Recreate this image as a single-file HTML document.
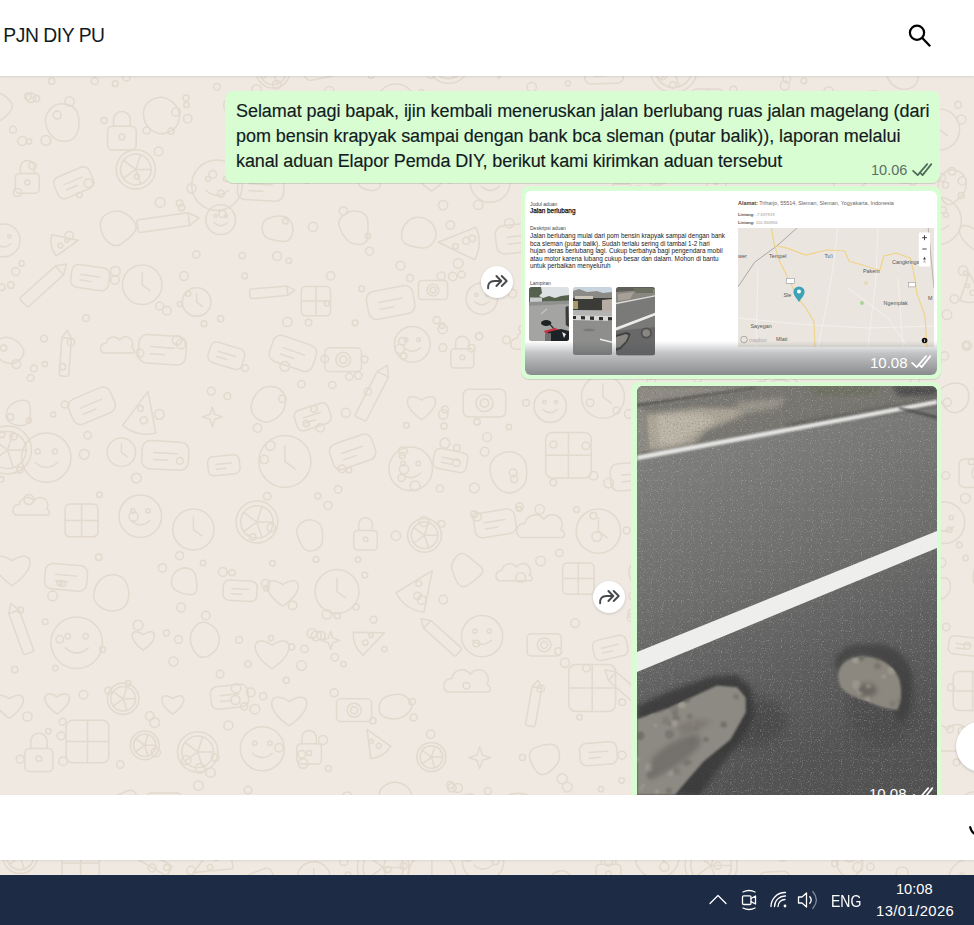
<!DOCTYPE html>
<html><head><meta charset="utf-8">
<style>
*{margin:0;padding:0;box-sizing:border-box}
html,body{width:974px;height:925px;overflow:hidden}
body{position:relative;background:#efe9e2;font-family:"Liberation Sans",sans-serif;color:#111b21}
.abs{position:absolute}
#chat{left:0;top:0;width:974px;height:795px;overflow:hidden}
#hdr{left:0;top:0;width:974px;height:76px;background:#fff;box-shadow:0 1px 2px rgba(11,20,26,.10);z-index:5}
#title{left:3.3px;top:24.5px;font-size:19.3px;line-height:22px;letter-spacing:-0.45px;white-space:nowrap}
.bub{background:#d9fdd3;border-radius:8px;box-shadow:0 1px 0.5px rgba(11,20,26,.13)}
.ln{position:absolute;left:236px;font-size:18px;line-height:22px;white-space:nowrap;color:#111b21;-webkit-text-stroke:0.15px #111b21}
.fwd{width:32px;height:32px;border-radius:50%;background:#fff;box-shadow:0 1px 3px rgba(11,20,26,.16)}
#input{left:0;top:795px;width:974px;height:65px;background:#fff;z-index:5;box-shadow:0 1px 2px rgba(11,20,26,.08)}
#tb{left:0;top:875px;width:974px;height:50px;background:#1d2b44;z-index:6}
.tbt{position:absolute;color:#fff;white-space:nowrap}
.tm{position:absolute;font-size:14.5px;line-height:16px;white-space:nowrap}
.s{position:absolute;white-space:nowrap;line-height:1}
</style></head><body>
<svg class="abs" style="left:0;top:0" width="974" height="875" viewBox="0 0 974 875"><g fill="none" stroke="#e3d9cd" stroke-width="1.5" stroke-linecap="round" stroke-linejoin="round"><circle cx="-1.3" cy="1.7" r="19.4"/><path d="M-10.1 5.6 Q-1.3 13.3 7.4 5.6"/><circle cx="-8.1" cy="-3.2" r="1.9"/><circle cx="5.5" cy="-3.2" r="1.9"/><g transform="rotate(25 67.9 -8.7)"><rect x="46.4" y="-21.6" width="43.1" height="25.9" rx="7.5"/><path d="M57.2 -10.8 h21.6 M57.2 -4.4 h12.9"/></g><circle cx="107.2" cy="-1.5" r="15.1"/><circle cx="107.2" cy="-1.5" r="11.8"/><path d="M107.2 -1.5 L119.0 -1.5"/><path d="M107.2 -1.5 L110.8 9.7"/><path d="M107.2 -1.5 L97.7 5.4"/><path d="M107.2 -1.5 L97.7 -8.4"/><path d="M107.2 -1.5 L110.8 -12.7"/><path d="M182.7 22.3 C157.3 5.4 163.6 -13.6 182.7 -0.9 C201.7 -13.6 208.0 5.4 182.7 22.3Z"/><g transform="rotate(135 229.1 -1.3)"><rect x="207.6" y="-6.7" width="43.0" height="10.7" rx="2"/><path d="M207.6 -6.7 L199.0 -1.3 L207.6 4.1"/></g><rect x="256.6" y="-25.7" width="42.4" height="27.6" rx="5.3"/><circle cx="277.8" cy="-11.9" r="8.5"/><circle cx="277.8" cy="-11.9" r="4.2"/><path d="M370.7 -12.8 Q373.1 -4.9 369.5 1.5 Q365.9 7.8 358.9 10.0 Q351.9 12.2 346.7 7.1 Q341.5 2.0 342.2 -4.5 Q342.8 -11.1 347.1 -17.8 Q351.3 -24.6 359.8 -22.6 Q368.4 -20.7 370.7 -12.8 Z"/><path d="M392.4 15.1 a8.1 8.1 0 0 1 4.6 -15.0 a11.5 11.5 0 0 1 20.8 -4.6 a9.2 9.2 0 0 1 18.5 11.5 a4.6 4.6 0 0 1 2.3 8.1 Z"/><circle cx="464.4" cy="-13.2" r="18.8"/><path d="M455.9 -9.4 Q464.4 -1.9 472.8 -9.4"/><circle cx="457.8" cy="-17.9" r="1.9"/><circle cx="470.9" cy="-17.9" r="1.9"/><polygon points="531.7,-10.2 533.4,-4.9 538.7,-3.2 533.4,-1.4 531.7,3.8 530.0,-1.4 524.7,-3.2 530.0,-4.9"/><g transform="rotate(20 571.9 11.5)"><rect x="553.4" y="0.4" width="37.0" height="22.2" rx="6.5"/><path d="M562.6 9.6 h18.5 M562.6 15.2 h11.1"/></g><path d="M648.5 -18.3 Q651.7 -12.0 648.0 -6.2 Q644.4 -0.4 637.8 2.2 Q631.3 4.7 622.9 1.4 Q614.4 -2.0 615.3 -11.5 Q616.1 -21.1 623.9 -23.9 Q631.8 -26.7 638.5 -25.7 Q645.3 -24.7 648.5 -18.3 Z"/><g transform="rotate(10 684.8 -12.3)"><rect x="668.7" y="-22.0" width="32.3" height="19.4" rx="5.6"/><path d="M676.8 -13.9 h16.1 M676.8 -9.1 h9.7"/></g><circle cx="745.3" cy="0.2" r="19.0"/><circle cx="745.3" cy="0.2" r="14.8"/><path d="M745.3 0.2 L760.1 0.2"/><path d="M745.3 0.2 L749.9 14.4"/><path d="M745.3 0.2 L733.3 9.0"/><path d="M745.3 0.2 L733.3 -8.5"/><path d="M745.3 0.2 L749.9 -13.9"/><path d="M819.7 -8.4 Q822.0 -2.9 819.7 2.5 Q817.4 7.9 811.8 8.2 Q806.1 8.5 801.1 5.8 Q796.1 3.1 798.6 -1.8 Q801.1 -6.6 803.9 -9.4 Q806.6 -12.2 812.1 -13.0 Q817.5 -13.9 819.7 -8.4 Z"/><path d="M872.9 22.9 C841.8 2.2 849.6 -21.1 872.9 -5.6 C896.1 -21.1 903.9 2.2 872.9 22.9Z"/><path d="M896.0 2.8 a8.4 8.4 0 0 1 4.8 -15.6 a12.0 12.0 0 0 1 21.6 -4.8 a9.6 9.6 0 0 1 19.2 12.0 a4.8 4.8 0 0 1 2.4 8.4 Z"/><path d="M995.6 -18.7 Q997.4 -11.9 995.6 -5.0 Q993.8 1.9 986.6 2.6 Q979.3 3.4 973.7 -0.7 Q968.0 -4.8 966.1 -12.8 Q964.2 -20.9 971.7 -24.5 Q979.1 -28.2 986.4 -26.9 Q993.7 -25.5 995.6 -18.7 Z"/><circle cx="39.3" cy="49.1" r="17.7"/><circle cx="39.3" cy="49.1" r="13.8"/><path d="M39.3 49.1 L53.1 49.1"/><path d="M39.3 49.1 L43.5 62.3"/><path d="M39.3 49.1 L28.1 57.2"/><path d="M39.3 49.1 L28.1 41.0"/><path d="M39.3 49.1 L43.5 36.0"/><path d="M89.2 57.2 Q92.9 61.1 90.2 66.2 Q87.5 71.3 81.9 73.0 Q76.3 74.7 72.4 70.5 Q68.6 66.3 68.3 61.0 Q68.0 55.6 72.6 53.5 Q77.2 51.3 81.3 52.4 Q85.5 53.4 89.2 57.2 Z"/><rect x="123.9" y="56.7" width="20.2" height="16.9" rx="3.4"/><path d="M128.2 56.7 v-5.1 a5.9 5.9 0 0 1 11.8 0 v5.1"/><circle cx="134.1" cy="64.2" r="2.0"/><g transform="rotate(-14 208.7 51.2)"><rect x="191.2" y="40.7" width="35.0" height="21.0" rx="6.1"/><path d="M200.0 49.4 h17.5 M200.0 54.7 h10.5"/></g><circle cx="273.0" cy="71.4" r="16.7"/><circle cx="273.0" cy="71.4" r="13.1"/><path d="M273.0 71.4 L286.1 71.4"/><path d="M273.0 71.4 L277.1 83.8"/><path d="M273.0 71.4 L262.5 79.0"/><path d="M273.0 71.4 L262.5 63.7"/><path d="M273.0 71.4 L277.1 58.9"/><g transform="rotate(-12 320.7 67.9)"><rect x="303.3" y="57.4" width="34.7" height="20.8" rx="6.1"/><path d="M312.0 66.1 h17.4 M312.0 71.3 h10.4"/></g><path d="M395.8 38.7 Q396.0 45.9 394.1 51.0 Q392.1 56.1 386.4 58.1 Q380.8 60.0 375.1 56.5 Q369.5 52.9 371.1 46.7 Q372.6 40.5 376.7 36.2 Q380.8 31.9 388.1 31.7 Q395.5 31.5 395.8 38.7 Z"/><circle cx="448.5" cy="62.4" r="21.1"/><circle cx="448.5" cy="62.4" r="16.4"/><path d="M448.5 62.4 L464.9 62.4"/><path d="M448.5 62.4 L453.5 78.0"/><path d="M448.5 62.4 L435.2 72.1"/><path d="M448.5 62.4 L435.2 52.7"/><path d="M448.5 62.4 L453.5 46.8"/><g transform="rotate(17 504.9 57.3)"><path d="M504.9 79.7 L489.2 43.8 Q504.9 36.0 520.5 43.8 Z"/><circle cx="502.6" cy="52.8" r="3.4"/><circle cx="508.2" cy="62.9" r="2.7"/></g><g transform="rotate(-6 537.6 61.8)"><rect x="522.8" y="52.9" width="29.6" height="17.8" rx="5.2"/><path d="M530.2 60.3 h14.8 M530.2 64.8 h8.9"/></g><g transform="rotate(-2 603.9 72.0)"><rect x="584.5" y="60.3" width="38.9" height="23.3" rx="6.8"/><path d="M594.2 70.0 h19.4 M594.2 75.9 h11.7"/></g><circle cx="673.6" cy="69.2" r="23.5"/><circle cx="673.6" cy="69.2" r="18.3"/><path d="M673.6 69.2 L692.0 69.2"/><path d="M673.6 69.2 L679.3 86.7"/><path d="M673.6 69.2 L658.8 80.0"/><path d="M673.6 69.2 L658.8 58.4"/><path d="M673.6 69.2 L679.3 51.8"/><g transform="rotate(1 736.6 53.9)"><rect x="711.8" y="39.0" width="49.6" height="29.8" rx="8.7"/><path d="M724.2 51.4 h24.8 M724.2 58.8 h14.9"/></g><g transform="rotate(14 795.4 44.8)"><rect x="774.6" y="32.3" width="41.7" height="25.0" rx="7.3"/><path d="M785.0 42.8 h20.9 M785.0 49.0 h12.5"/></g><polygon points="845.5,47.3 847.4,52.8 852.9,54.6 847.4,56.4 845.5,61.9 843.7,56.4 838.2,54.6 843.7,52.8"/><path d="M917.9 63.8 Q920.1 71.8 917.8 79.8 Q915.6 87.7 907.1 89.0 Q898.7 90.3 892.8 84.9 Q887.0 79.5 885.4 71.0 Q883.7 62.6 891.7 60.2 Q899.7 57.8 907.7 56.8 Q915.7 55.8 917.9 63.8 Z"/><g transform="rotate(19 943.8 60.8)"><rect x="929.6" y="52.3" width="28.5" height="17.1" rx="5.0"/><path d="M936.7 59.4 h14.3 M936.7 63.7 h8.6"/></g><g transform="rotate(-25 1004.2 65.8)"><rect x="987.1" y="55.6" width="34.1" height="20.5" rx="6.0"/><path d="M995.6 64.1 h17.1 M995.6 69.3 h10.2"/></g><path d="M9.8 100.5 Q14.5 106.0 10.1 111.8 Q5.6 117.7 -1.2 121.4 Q-8.1 125.2 -13.2 119.1 Q-18.3 113.0 -17.3 106.5 Q-16.4 99.9 -11.8 95.4 Q-7.1 91.0 -1.0 93.0 Q5.1 94.9 9.8 100.5 Z"/><path d="M78.2 115.5 Q80.3 124.5 77.4 132.5 Q74.5 140.5 66.2 141.2 Q57.8 141.9 52.5 136.7 Q47.3 131.5 45.7 123.7 Q44.1 116.0 50.4 109.1 Q56.6 102.1 66.4 104.3 Q76.1 106.5 78.2 115.5 Z"/><rect x="107.6" y="126.2" width="28.6" height="23.9" rx="4.8"/><path d="M113.6 126.2 v-7.2 a8.4 8.4 0 0 1 16.7 0 v7.2"/><circle cx="121.9" cy="137.0" r="2.9"/><path d="M177.6 108.4 Q181.2 115.2 178.2 122.8 Q175.2 130.3 166.9 132.9 Q158.5 135.5 151.3 130.0 Q144.0 124.4 143.5 114.9 Q142.9 105.5 150.8 100.4 Q158.6 95.3 166.3 98.4 Q174.0 101.6 177.6 108.4 Z"/><path d="M241.2 127.5 C214.6 109.8 221.3 89.9 241.2 103.1 C261.1 89.9 267.8 109.8 241.2 127.5Z"/><polygon points="283.9,103.3 286.0,109.8 292.5,111.9 286.0,114.1 283.9,120.5 281.7,114.1 275.2,111.9 281.7,109.8"/><rect x="329.2" y="121.9" width="20.2" height="16.8" rx="3.4"/><path d="M333.4 121.9 v-5.1 a5.9 5.9 0 0 1 11.8 0 v5.1"/><circle cx="339.3" cy="129.4" r="2.0"/><circle cx="395.9" cy="103.3" r="19.4"/><path d="M387.2 107.2 Q395.9 114.9 404.7 107.2"/><circle cx="389.2" cy="98.5" r="1.9"/><circle cx="402.7" cy="98.5" r="1.9"/><g transform="rotate(350 467.6 120.3)"><path d="M467.6 145.8 L449.8 105.0 Q467.6 96.1 485.5 105.0 Z"/><circle cx="465.1" cy="115.2" r="3.8"/><circle cx="471.5" cy="126.7" r="3.1"/></g><rect x="503.9" y="123.5" width="19.4" height="16.1" rx="3.2"/><path d="M507.9 123.5 v-4.8 a5.7 5.7 0 0 1 11.3 0 v4.8"/><circle cx="513.5" cy="130.7" r="1.9"/><path d="M566.3 128.1 C546.9 115.2 551.8 100.7 566.3 110.4 C580.8 100.7 585.7 115.2 566.3 128.1Z"/><g transform="rotate(179 631.6 111.7)"><rect x="612.9" y="107.0" width="37.4" height="9.4" rx="2"/><path d="M612.9 107.0 L605.4 111.7 L612.9 116.4"/></g><rect x="691.8" y="88.9" width="31.1" height="31.1" rx="4.7"/><path d="M707.4 88.9 V120.0 M691.8 104.4 H722.9"/><polygon points="752.7,110.2 755.0,117.2 762.0,119.5 755.0,121.8 752.7,128.8 750.4,121.8 743.4,119.5 750.4,117.2"/><path d="M803.1 132.1 a6.8 6.8 0 0 1 3.9 -12.7 a9.8 9.8 0 0 1 17.6 -3.9 a7.8 7.8 0 0 1 15.7 9.8 a3.9 3.9 0 0 1 2.0 6.8 Z"/><circle cx="874.2" cy="107.7" r="16.6"/><path d="M866.8 111.0 Q874.2 117.7 881.7 111.0"/><circle cx="868.4" cy="103.6" r="1.7"/><circle cx="880.0" cy="103.6" r="1.7"/><circle cx="939.2" cy="129.5" r="20.4"/><path d="M939.2 117.2 V129.5 L947.4 135.6"/><polygon points="994.1,103.6 996.0,109.2 1001.5,111.0 996.0,112.8 994.1,118.3 992.3,112.8 986.8,111.0 992.3,109.2"/><rect x="15.4" y="173.4" width="23.8" height="19.8" rx="4.0"/><path d="M20.4 173.4 v-6.0 a6.9 6.9 0 0 1 13.9 0 v6.0"/><circle cx="27.3" cy="182.4" r="2.4"/><g transform="rotate(-23 73.8 182.7)"><rect x="54.6" y="171.2" width="38.3" height="23.0" rx="6.7"/><path d="M64.2 180.7 h19.1 M64.2 186.5 h11.5"/></g><circle cx="135.8" cy="169.4" r="19.6"/><circle cx="135.8" cy="169.4" r="15.3"/><path d="M135.8 169.4 L151.2 169.4"/><path d="M135.8 169.4 L140.6 184.0"/><path d="M135.8 169.4 L123.4 178.4"/><path d="M135.8 169.4 L123.4 160.4"/><path d="M135.8 169.4 L140.6 154.8"/><circle cx="217.0" cy="185.2" r="25.3"/><path d="M205.6 190.3 Q217.0 200.4 228.4 190.3"/><circle cx="208.1" cy="178.9" r="2.5"/><circle cx="225.9" cy="178.9" r="2.5"/><g transform="rotate(3 260.8 186.6)"><rect x="237.7" y="172.7" width="46.2" height="27.7" rx="8.1"/><path d="M249.2 184.3 h23.1 M249.2 191.2 h13.9"/></g><g transform="rotate(143 319.7 168.1)"><rect x="299.5" y="163.1" width="40.5" height="10.1" rx="2"/><path d="M299.5 163.1 L291.4 168.1 L299.5 173.2"/></g><path d="M379.3 174.6 Q381.8 178.8 380.5 184.4 Q379.2 190.1 373.3 190.5 Q367.4 191.0 362.4 188.0 Q357.5 184.9 357.7 178.9 Q358.0 172.9 362.8 170.3 Q367.6 167.7 372.2 169.1 Q376.8 170.5 379.3 174.6 Z"/><path d="M431.6 191.2 C407.3 175.1 413.4 156.9 431.6 169.0 C449.7 156.9 455.8 175.1 431.6 191.2Z"/><circle cx="490.2" cy="182.4" r="19.9"/><path d="M481.3 186.4 Q490.2 194.4 499.2 186.4"/><circle cx="483.3" cy="177.5" r="2.0"/><circle cx="497.2" cy="177.5" r="2.0"/><circle cx="556.3" cy="161.8" r="19.0"/><path d="M547.8 165.6 Q556.3 173.2 564.9 165.6"/><circle cx="549.7" cy="157.1" r="1.9"/><circle cx="563.0" cy="157.1" r="1.9"/><rect x="611.6" y="184.2" width="20.3" height="17.0" rx="3.4"/><path d="M615.9 184.2 v-5.1 a5.9 5.9 0 0 1 11.9 0 v5.1"/><circle cx="621.8" cy="191.8" r="2.0"/><g transform="rotate(-19 666.8 169.5)"><rect x="646.5" y="157.3" width="40.6" height="24.4" rx="7.1"/><path d="M656.7 167.5 h20.3 M656.7 173.6 h12.2"/></g><rect x="707.0" y="175.7" width="18.7" height="15.6" rx="3.1"/><path d="M710.9 175.7 v-4.7 a5.4 5.4 0 0 1 10.9 0 v4.7"/><circle cx="716.4" cy="182.7" r="1.9"/><path d="M799.7 155.5 Q800.4 160.6 799.1 165.1 Q797.9 169.5 792.8 171.9 Q787.7 174.4 784.3 169.9 Q780.8 165.4 780.1 160.3 Q779.4 155.1 783.7 151.7 Q788.0 148.3 793.5 149.3 Q799.1 150.3 799.7 155.5 Z"/><path d="M868.1 169.2 Q872.2 177.5 865.8 182.8 Q859.4 188.1 853.0 192.1 Q846.6 196.1 839.3 191.3 Q832.1 186.5 832.9 177.9 Q833.8 169.2 840.3 164.4 Q846.8 159.6 855.4 160.3 Q864.1 160.9 868.1 169.2 Z"/><path d="M915.7 159.2 Q920.4 166.1 917.3 175.0 Q914.2 184.0 905.2 183.2 Q896.2 182.5 888.3 179.0 Q880.4 175.5 880.1 166.0 Q879.8 156.4 887.3 149.9 Q894.8 143.4 902.8 147.9 Q910.9 152.4 915.7 159.2 Z"/><path d="M965.4 178.8 Q967.6 185.8 964.4 191.7 Q961.1 197.5 954.0 202.5 Q946.9 207.6 942.5 200.0 Q938.1 192.5 938.3 185.9 Q938.5 179.4 943.2 174.0 Q947.9 168.7 955.5 170.2 Q963.1 171.7 965.4 178.8 Z"/><circle cx="1027.4" cy="175.2" r="16.4"/><circle cx="1027.4" cy="175.2" r="12.8"/><path d="M1027.4 175.2 L1040.2 175.2"/><path d="M1027.4 175.2 L1031.3 187.4"/><path d="M1027.4 175.2 L1017.0 182.7"/><path d="M1027.4 175.2 L1017.0 167.7"/><path d="M1027.4 175.2 L1031.3 163.0"/><circle cx="3.6" cy="240.4" r="16.4"/><path d="M-3.8 243.7 Q3.6 250.2 11.0 243.7"/><circle cx="-2.2" cy="236.3" r="1.6"/><circle cx="9.3" cy="236.3" r="1.6"/><g transform="rotate(258 63.1 243.5)"><path d="M63.1 258.9 L52.3 234.3 Q63.1 228.9 73.9 234.3 Z"/><circle cx="61.6" cy="240.4" r="2.3"/><circle cx="65.4" cy="247.4" r="1.8"/></g><path d="M134.1 221.4 Q138.5 227.6 133.6 233.3 Q128.8 238.9 121.9 243.7 Q115.0 248.5 108.4 242.4 Q101.8 236.3 100.5 227.0 Q99.3 217.8 107.4 213.6 Q115.6 209.4 122.7 212.2 Q129.7 215.1 134.1 221.4 Z"/><g transform="rotate(172 163.2 222.8)"><rect x="137.3" y="216.4" width="51.8" height="12.9" rx="2"/><path d="M137.3 216.4 L127.0 222.8 L137.3 229.3"/></g><circle cx="220.7" cy="219.7" r="14.9"/><path d="M213.9 222.7 Q220.7 228.7 227.4 222.7"/><circle cx="215.4" cy="216.0" r="1.5"/><circle cx="225.9" cy="216.0" r="1.5"/><path d="M291.4 222.8 Q294.3 228.9 291.8 235.6 Q289.3 242.2 282.6 241.5 Q276.0 240.9 269.3 238.8 Q262.7 236.7 262.2 228.7 Q261.7 220.7 268.7 218.2 Q275.7 215.7 282.1 216.2 Q288.5 216.6 291.4 222.8 Z"/><path d="M367.9 221.3 Q368.3 229.3 367.6 237.0 Q366.9 244.6 359.1 244.5 Q351.3 244.5 346.9 239.8 Q342.6 235.2 339.7 228.0 Q336.8 220.7 343.5 215.2 Q350.2 209.7 358.8 211.5 Q367.5 213.3 367.9 221.3 Z"/><path d="M434.1 226.7 Q438.2 234.0 434.0 241.2 Q429.8 248.4 422.5 248.1 Q415.2 247.7 408.0 245.0 Q400.9 242.3 401.5 234.2 Q402.1 226.1 408.2 221.1 Q414.2 216.1 422.1 217.8 Q429.9 219.4 434.1 226.7 Z"/><g transform="rotate(92 461.4 243.1)"><path d="M461.4 266.3 L445.1 229.2 Q461.4 221.1 477.6 229.2 Z"/><circle cx="459.0" cy="238.5" r="3.5"/><circle cx="464.8" cy="248.9" r="2.8"/></g><g transform="rotate(-6 519.4 238.2)"><rect x="495.8" y="224.1" width="47.1" height="28.3" rx="8.2"/><path d="M507.6 235.9 h23.6 M507.6 242.9 h14.1"/></g><g transform="rotate(319 579.1 218.3)"><path d="M579.1 244.2 L561.0 202.8 Q579.1 193.7 597.2 202.8 Z"/><circle cx="576.5" cy="213.1" r="3.9"/><circle cx="583.0" cy="224.8" r="3.1"/></g><circle cx="625.4" cy="225.6" r="18.1"/><path d="M625.4 214.8 V225.6 L632.6 231.1"/><g transform="rotate(6 700.5 233.9)"><rect x="681.8" y="222.7" width="37.4" height="22.4" rx="6.5"/><path d="M691.1 232.1 h18.7 M691.1 237.7 h11.2"/></g><rect x="732.2" y="211.9" width="51.5" height="51.5" rx="7.7"/><path d="M758.0 211.9 V263.4 M732.2 237.6 H783.7"/><rect x="781.6" y="225.0" width="34.2" height="22.2" rx="4.3"/><circle cx="798.6" cy="236.1" r="6.8"/><circle cx="798.6" cy="236.1" r="3.4"/><path d="M879.3 212.5 Q880.4 219.4 878.6 225.4 Q876.8 231.4 870.3 232.9 Q863.8 234.5 858.3 230.4 Q852.8 226.4 852.0 219.0 Q851.2 211.7 857.4 207.4 Q863.5 203.1 870.9 204.4 Q878.2 205.7 879.3 212.5 Z"/><circle cx="937.7" cy="220.8" r="23.7"/><path d="M927.0 225.5 Q937.7 235.0 948.4 225.5"/><circle cx="929.4" cy="214.9" r="2.4"/><circle cx="946.0" cy="214.9" r="2.4"/><path d="M974.1 249.6 C951.8 234.7 957.4 218.0 974.1 229.1 C990.9 218.0 996.5 234.7 974.1 249.6Z"/><g transform="rotate(138 41.3 286.8)"><rect x="17.0" y="280.7" width="48.5" height="12.1" rx="2"/><path d="M17.0 280.7 L7.3 286.8 L17.0 292.9"/></g><g transform="rotate(8 90.1 277.6)"><rect x="71.1" y="266.2" width="38.1" height="22.9" rx="6.7"/><path d="M80.6 275.7 h19.0 M80.6 281.4 h11.4"/></g><circle cx="142.2" cy="284.7" r="19.8"/><path d="M142.2 272.9 V284.7 L150.1 290.7"/><circle cx="196.6" cy="302.0" r="14.3"/><path d="M196.6 293.4 V302.0 L202.3 306.3"/><g transform="rotate(175 268.6 292.4)"><rect x="249.7" y="287.7" width="37.8" height="9.5" rx="2"/><path d="M249.7 287.7 L242.2 292.4 L249.7 297.1"/></g><rect x="301.3" y="286.5" width="29.2" height="29.2" rx="4.4"/><path d="M315.9 286.5 V315.7 M301.3 301.1 H330.5"/><g transform="rotate(-11 390.7 302.4)"><rect x="367.1" y="288.3" width="47.1" height="28.3" rx="8.2"/><path d="M378.9 300.1 h23.6 M378.9 307.2 h14.1"/></g><rect x="418.5" y="280.6" width="29.1" height="18.9" rx="3.6"/><circle cx="433.0" cy="290.1" r="5.8"/><circle cx="433.0" cy="290.1" r="2.9"/><circle cx="481.8" cy="298.7" r="15.7"/><path d="M474.7 301.8 Q481.8 308.1 488.8 301.8"/><circle cx="476.3" cy="294.8" r="1.6"/><circle cx="487.3" cy="294.8" r="1.6"/><circle cx="563.9" cy="282.9" r="14.6"/><path d="M557.3 285.8 Q563.9 291.6 570.5 285.8"/><circle cx="558.8" cy="279.2" r="1.5"/><circle cx="569.0" cy="279.2" r="1.5"/><path d="M606.7 293.9 C584.7 279.3 590.2 262.9 606.7 273.8 C623.1 262.9 628.6 279.3 606.7 293.9Z"/><circle cx="657.3" cy="286.2" r="22.0"/><circle cx="657.3" cy="286.2" r="17.2"/><path d="M657.3 286.2 L674.5 286.2"/><path d="M657.3 286.2 L662.6 302.5"/><path d="M657.3 286.2 L643.4 296.3"/><path d="M657.3 286.2 L643.4 276.1"/><path d="M657.3 286.2 L662.6 269.8"/><path d="M736.6 277.6 Q740.2 283.3 737.3 290.0 Q734.4 296.6 727.7 295.9 Q721.1 295.1 716.5 292.1 Q711.9 289.0 712.4 283.6 Q713.0 278.1 716.7 273.6 Q720.5 269.1 726.7 270.5 Q732.9 271.8 736.6 277.6 Z"/><g transform="rotate(312 777.6 290.2)"><path d="M777.6 307.5 L765.5 279.8 Q777.6 273.8 789.7 279.8 Z"/><circle cx="775.9" cy="286.7" r="2.6"/><circle cx="780.2" cy="294.5" r="2.1"/></g><path d="M860.1 286.6 Q865.6 291.8 860.5 297.5 Q855.3 303.2 849.1 304.9 Q842.8 306.5 834.8 303.8 Q826.9 301.1 827.1 291.9 Q827.4 282.8 834.5 277.3 Q841.6 271.8 848.0 276.6 Q854.5 281.4 860.1 286.6 Z"/><path d="M894.2 279.7 Q895.5 283.6 894.2 287.4 Q892.9 291.3 888.6 292.4 Q884.4 293.5 879.7 291.4 Q875.1 289.2 874.7 283.4 Q874.2 277.6 879.4 275.9 Q884.6 274.3 888.7 275.1 Q892.9 275.8 894.2 279.7 Z"/><g transform="rotate(175 970.5 289.6)"><path d="M970.5 306.1 L958.9 279.6 Q970.5 273.9 982.1 279.6 Z"/><circle cx="968.8" cy="286.2" r="2.5"/><circle cx="973.0" cy="293.7" r="2.0"/></g><g transform="rotate(3 1014.8 279.7)"><rect x="991.2" y="265.6" width="47.3" height="28.4" rx="8.3"/><path d="M1003.0 277.4 h23.6 M1003.0 284.5 h14.2"/></g><path d="M21.7 346.1 Q26.0 351.5 21.9 357.2 Q17.8 362.9 11.8 363.4 Q5.8 363.9 1.5 360.5 Q-2.9 357.0 -5.2 350.3 Q-7.6 343.6 -1.3 339.6 Q5.0 335.7 11.2 338.1 Q17.3 340.6 21.7 346.1 Z"/><g transform="rotate(94 65.3 357.1)"><rect x="46.1" y="352.3" width="38.3" height="9.6" rx="2"/><path d="M46.1 352.3 L38.5 357.1 L46.1 361.9"/></g><path d="M103.3 352.9 a5.2 5.2 0 0 1 3.0 -9.7 a7.5 7.5 0 0 1 13.4 -3.0 a6.0 6.0 0 0 1 12.0 7.5 a3.0 3.0 0 0 1 1.5 5.2 Z"/><g transform="rotate(4 162.3 349.8)"><rect x="138.5" y="335.5" width="47.6" height="28.5" rx="8.3"/><path d="M150.4 347.4 h23.8 M150.4 354.6 h14.3"/></g><g transform="rotate(17 226.4 355.7)"><rect x="208.6" y="345.1" width="35.4" height="21.3" rx="6.2"/><path d="M217.5 353.9 h17.7 M217.5 359.3 h10.6"/></g><g transform="rotate(19 292.9 353.5)"><rect x="270.2" y="339.8" width="45.4" height="27.2" rx="7.9"/><path d="M281.6 351.2 h22.7 M281.6 358.0 h13.6"/></g><rect x="324.9" y="347.7" width="36.6" height="23.8" rx="4.6"/><circle cx="343.2" cy="359.6" r="7.3"/><circle cx="343.2" cy="359.6" r="3.7"/><circle cx="412.3" cy="344.3" r="17.9"/><path d="M404.3 347.8 Q412.3 355.0 420.4 347.8"/><circle cx="406.1" cy="339.8" r="1.8"/><circle cx="418.6" cy="339.8" r="1.8"/><rect x="450.8" y="348.7" width="23.1" height="19.3" rx="3.9"/><path d="M455.6 348.7 v-5.8 a6.7 6.7 0 0 1 13.5 0 v5.8"/><circle cx="462.3" cy="357.4" r="2.3"/><path d="M513.8 349.2 a5.8 5.8 0 0 1 3.3 -10.8 a8.3 8.3 0 0 1 15.0 -3.3 a6.7 6.7 0 0 1 13.3 8.3 a3.3 3.3 0 0 1 1.7 5.8 Z"/><rect x="578.1" y="345.4" width="30.0" height="19.5" rx="3.8"/><circle cx="593.1" cy="355.2" r="6.0"/><circle cx="593.1" cy="355.2" r="3.0"/><rect x="626.2" y="313.7" width="42.0" height="42.0" rx="6.3"/><path d="M647.2 313.7 V355.7 M626.2 334.7 H668.2"/><g transform="rotate(276 704.3 354.7)"><path d="M704.3 378.3 L687.8 340.5 Q704.3 332.3 720.8 340.5 Z"/><circle cx="701.9" cy="350.0" r="3.5"/><circle cx="707.8" cy="360.6" r="2.8"/></g><g transform="rotate(116 744.3 350.6)"><rect x="728.2" y="346.5" width="32.2" height="8.1" rx="2"/><path d="M728.2 346.5 L721.8 350.6 L728.2 354.6"/></g><polygon points="822.7,334.6 824.5,340.1 829.9,341.9 824.5,343.7 822.7,349.1 820.9,343.7 815.4,341.9 820.9,340.1"/><polygon points="860.4,332.1 863.0,339.8 870.7,342.3 863.0,344.8 860.4,352.5 857.9,344.8 850.2,342.3 857.9,339.8"/><g transform="rotate(-8 915.8 349.3)"><rect x="897.8" y="338.5" width="36.0" height="21.6" rx="6.3"/><path d="M906.8 347.5 h18.0 M906.8 352.9 h10.8"/></g><g transform="rotate(16 992.6 359.2)"><rect x="978.3" y="350.6" width="28.6" height="17.2" rx="5.0"/><path d="M985.5 357.7 h14.3 M985.5 362.0 h8.6"/></g><path d="M30.1 406.3 Q30.7 412.9 29.6 418.9 Q28.6 424.9 22.3 425.6 Q16.0 426.2 10.6 422.9 Q5.2 419.5 6.3 413.4 Q7.5 407.3 11.9 404.0 Q16.3 400.7 22.9 400.3 Q29.5 399.8 30.1 406.3 Z"/><g transform="rotate(-23 91.8 405.8)"><rect x="69.3" y="392.3" width="45.0" height="27.0" rx="7.9"/><path d="M80.6 403.6 h22.5 M80.6 410.3 h13.5"/></g><g transform="rotate(193 142.5 415.1)"><path d="M142.5 439.4 L125.5 400.6 Q142.5 392.1 159.5 400.6 Z"/><circle cx="140.1" cy="410.3" r="3.6"/><circle cx="146.1" cy="421.2" r="2.9"/></g><polygon points="212.3,407.0 214.8,414.4 222.2,416.9 214.8,419.3 212.3,426.7 209.9,419.3 202.5,416.9 209.9,414.4"/><path d="M284.5 395.9 Q286.9 403.8 283.4 410.3 Q279.8 416.8 272.3 420.7 Q264.7 424.6 257.3 418.9 Q249.8 413.3 251.4 404.6 Q253.1 395.9 259.2 390.7 Q265.3 385.4 273.7 386.7 Q282.1 387.9 284.5 395.9 Z"/><g transform="rotate(-18 312.7 416.8)"><rect x="295.0" y="406.2" width="35.4" height="21.2" rx="6.2"/><path d="M303.8 415.0 h17.7 M303.8 420.4 h10.6"/></g><g transform="rotate(117 371.5 396.4)"><rect x="346.6" y="390.1" width="49.9" height="12.5" rx="2"/><path d="M346.6 390.1 L336.6 396.4 L346.6 402.6"/></g><path d="M421.5 419.7 C400.2 405.5 405.5 389.5 421.5 400.1 C437.5 389.5 442.8 405.5 421.5 419.7Z"/><rect x="463.3" y="389.3" width="42.4" height="27.6" rx="5.3"/><circle cx="484.5" cy="403.1" r="8.5"/><circle cx="484.5" cy="403.1" r="4.2"/><circle cx="550.2" cy="406.2" r="16.2"/><path d="M542.9 409.5 Q550.2 416.0 557.5 409.5"/><circle cx="544.5" cy="402.2" r="1.6"/><circle cx="555.9" cy="402.2" r="1.6"/><circle cx="602.9" cy="396.8" r="21.5"/><path d="M602.9 383.9 V396.8 L611.5 403.3"/><rect x="667.5" y="405.4" width="23.8" height="19.8" rx="4.0"/><path d="M672.4 405.4 v-5.9 a6.9 6.9 0 0 1 13.9 0 v5.9"/><circle cx="679.4" cy="414.3" r="2.4"/><g transform="rotate(-11 722.3 418.8)"><rect x="702.5" y="406.9" width="39.6" height="23.7" rx="6.9"/><path d="M712.4 416.8 h19.8 M712.4 422.7 h11.9"/></g><circle cx="780.2" cy="398.1" r="23.6"/><circle cx="780.2" cy="398.1" r="18.4"/><path d="M780.2 398.1 L798.6 398.1"/><path d="M780.2 398.1 L785.9 415.6"/><path d="M780.2 398.1 L765.3 408.9"/><path d="M780.2 398.1 L765.3 387.3"/><path d="M780.2 398.1 L785.9 380.6"/><rect x="823.7" y="404.4" width="28.1" height="23.5" rx="4.7"/><path d="M829.6 404.4 v-7.0 a8.2 8.2 0 0 1 16.4 0 v7.0"/><circle cx="837.8" cy="415.0" r="2.8"/><polygon points="886.6,407.3 889.3,415.3 897.2,417.9 889.3,420.5 886.6,428.5 884.0,420.5 876.0,417.9 884.0,415.3"/><path d="M968.3 391.8 Q969.7 398.9 967.0 404.4 Q964.4 409.9 958.3 412.0 Q952.2 414.0 947.1 409.7 Q942.1 405.4 939.8 397.8 Q937.4 390.2 944.6 386.2 Q951.8 382.2 959.4 383.4 Q966.9 384.7 968.3 391.8 Z"/><path d="M1028.8 412.1 C1009.8 399.5 1014.6 385.2 1028.8 394.7 C1043.0 385.2 1047.8 399.5 1028.8 412.1Z"/><circle cx="7.6" cy="450.0" r="23.9"/><circle cx="7.6" cy="450.0" r="18.6"/><path d="M7.6 450.0 L26.2 450.0"/><path d="M7.6 450.0 L13.3 467.7"/><path d="M7.6 450.0 L-7.5 461.0"/><path d="M7.6 450.0 L-7.5 439.1"/><path d="M7.6 450.0 L13.3 432.3"/><circle cx="46.3" cy="457.6" r="24.7"/><path d="M35.2 462.5 Q46.3 472.4 57.4 462.5"/><circle cx="37.7" cy="451.4" r="2.5"/><circle cx="54.9" cy="451.4" r="2.5"/><circle cx="121.4" cy="452.3" r="14.2"/><path d="M121.4 443.8 V452.3 L127.1 456.6"/><g transform="rotate(3 165.3 455.4)"><rect x="141.9" y="441.4" width="46.8" height="28.1" rx="8.2"/><path d="M153.6 453.1 h23.4 M153.6 460.1 h14.0"/></g><g transform="rotate(-6 223.8 465.2)"><rect x="207.9" y="455.7" width="31.8" height="19.1" rx="5.6"/><path d="M215.9 463.6 h15.9 M215.9 468.4 h9.5"/></g><circle cx="284.9" cy="461.4" r="26.0"/><path d="M284.9 445.8 V461.4 L295.2 469.1"/><g transform="rotate(-19 352.7 451.9)"><rect x="330.4" y="438.5" width="44.5" height="26.7" rx="7.8"/><path d="M341.6 449.7 h22.2 M341.6 456.3 h13.3"/></g><circle cx="410.7" cy="468.9" r="21.8"/><path d="M400.9 473.3 Q410.7 482.0 420.5 473.3"/><circle cx="403.0" cy="463.5" r="2.2"/><circle cx="418.3" cy="463.5" r="2.2"/><g transform="rotate(11 450.3 460.6)"><rect x="433.5" y="450.4" width="33.7" height="20.2" rx="5.9"/><path d="M441.9 458.9 h16.8 M441.9 463.9 h10.1"/></g><path d="M525.7 463.6 Q527.6 471.6 526.0 479.9 Q524.3 488.1 515.1 491.7 Q505.8 495.2 498.4 488.3 Q491.1 481.3 490.1 471.2 Q489.2 461.0 497.7 455.4 Q506.2 449.8 515.0 452.7 Q523.9 455.7 525.7 463.6 Z"/><rect x="545.7" y="432.5" width="45.6" height="45.6" rx="6.8"/><path d="M568.4 432.5 V478.1 M545.7 455.3 H591.2"/><g transform="rotate(-4 633.2 476.5)"><rect x="610.5" y="462.8" width="45.4" height="27.2" rx="7.9"/><path d="M621.9 474.2 h22.7 M621.9 481.0 h13.6"/></g><circle cx="694.5" cy="460.7" r="15.7"/><path d="M687.5 463.8 Q694.5 470.1 701.6 463.8"/><circle cx="689.0" cy="456.8" r="1.6"/><circle cx="700.0" cy="456.8" r="1.6"/><g transform="rotate(102 742.6 469.0)"><rect x="726.5" y="464.9" width="32.3" height="8.1" rx="2"/><path d="M726.5 464.9 L720.0 469.0 L726.5 473.0"/></g><g transform="rotate(-23 799.0 463.0)"><rect x="783.8" y="453.8" width="30.4" height="18.2" rx="5.3"/><path d="M791.4 461.4 h15.2 M791.4 466.0 h9.1"/></g><path d="M875.3 445.5 Q877.5 453.5 875.7 461.9 Q873.9 470.4 864.6 472.9 Q855.4 475.5 851.0 467.8 Q846.7 460.1 846.4 453.3 Q846.1 446.6 851.5 442.6 Q857.0 438.5 865.0 438.0 Q873.1 437.5 875.3 445.5 Z"/><polygon points="927.5,466.3 929.9,473.5 937.0,475.8 929.9,478.1 927.5,485.2 925.2,478.1 918.1,475.8 925.2,473.5"/><rect x="959.0" y="458.9" width="43.8" height="28.5" rx="5.5"/><circle cx="980.9" cy="473.2" r="8.8"/><circle cx="980.9" cy="473.2" r="4.4"/><path d="M15.8 515.0 a5.7 5.7 0 0 1 3.3 -10.6 a8.1 8.1 0 0 1 14.6 -3.3 a6.5 6.5 0 0 1 13.0 8.1 a3.3 3.3 0 0 1 1.6 5.7 Z"/><rect x="65.1" y="503.9" width="32.9" height="32.9" rx="4.9"/><path d="M81.6 503.9 V536.8 M65.1 520.4 H98.0"/><circle cx="140.3" cy="516.2" r="21.3"/><path d="M130.7 520.5 Q140.3 529.0 149.9 520.5"/><circle cx="132.8" cy="510.9" r="2.1"/><circle cx="147.8" cy="510.9" r="2.1"/><circle cx="193.4" cy="529.5" r="20.6"/><path d="M193.4 517.1 V529.5 L201.7 535.6"/><circle cx="256.9" cy="522.0" r="20.9"/><circle cx="256.9" cy="522.0" r="16.3"/><path d="M256.9 522.0 L273.2 522.0"/><path d="M256.9 522.0 L261.9 537.5"/><path d="M256.9 522.0 L243.7 531.6"/><path d="M256.9 522.0 L243.7 512.4"/><path d="M256.9 522.0 L261.9 506.5"/><path d="M321.7 528.2 Q323.3 534.1 322.5 541.2 Q321.8 548.2 314.0 550.4 Q306.3 552.6 302.3 546.3 Q298.3 540.0 297.0 533.5 Q295.7 527.0 301.4 522.8 Q307.0 518.6 313.5 520.4 Q320.1 522.2 321.7 528.2 Z"/><rect x="353.8" y="530.5" width="23.5" height="19.6" rx="3.9"/><path d="M358.7 530.5 v-5.9 a6.8 6.8 0 0 1 13.7 0 v5.9"/><circle cx="365.6" cy="539.3" r="2.3"/><circle cx="424.5" cy="535.3" r="16.9"/><circle cx="424.5" cy="535.3" r="13.2"/><path d="M424.5 535.3 L437.6 535.3"/><path d="M424.5 535.3 L428.5 547.8"/><path d="M424.5 535.3 L413.8 543.0"/><path d="M424.5 535.3 L413.8 527.5"/><path d="M424.5 535.3 L428.5 522.8"/><g transform="rotate(-9 494.9 523.3)"><rect x="474.2" y="510.9" width="41.4" height="24.9" rx="7.3"/><path d="M484.6 521.2 h20.7 M484.6 527.4 h12.4"/></g><path d="M520.5 537.4 a7.4 7.4 0 0 1 4.2 -13.8 a10.6 10.6 0 0 1 19.1 -4.2 a8.5 8.5 0 0 1 17.0 10.6 a4.2 4.2 0 0 1 2.1 7.4 Z"/><circle cx="598.4" cy="531.1" r="22.2"/><path d="M598.4 517.8 V531.1 L607.3 537.8"/><g transform="rotate(95 663.2 529.2)"><path d="M663.2 553.2 L646.4 514.9 Q663.2 506.5 680.0 514.9 Z"/><circle cx="660.8" cy="524.4" r="3.6"/><circle cx="666.8" cy="535.2" r="2.9"/></g><circle cx="727.7" cy="530.7" r="14.4"/><path d="M721.3 533.6 Q727.7 539.3 734.2 533.6"/><circle cx="722.7" cy="527.1" r="1.4"/><circle cx="732.8" cy="527.1" r="1.4"/><circle cx="774.0" cy="535.6" r="17.7"/><circle cx="774.0" cy="535.6" r="13.8"/><path d="M774.0 535.6 L787.8 535.6"/><path d="M774.0 535.6 L778.3 548.8"/><path d="M774.0 535.6 L762.9 543.7"/><path d="M774.0 535.6 L762.9 527.5"/><path d="M774.0 535.6 L778.3 522.5"/><rect x="824.4" y="507.3" width="42.8" height="42.8" rx="6.4"/><path d="M845.8 507.3 V550.0 M824.4 528.7 H867.2"/><g transform="rotate(119 902.9 529.4)"><rect x="886.5" y="525.3" width="32.8" height="8.2" rx="2"/><path d="M886.5 525.3 L880.0 529.4 L886.5 533.5"/></g><circle cx="943.9" cy="522.8" r="20.8"/><path d="M934.6 526.9 Q943.9 535.3 953.3 526.9"/><circle cx="936.6" cy="517.6" r="2.1"/><circle cx="951.2" cy="517.6" r="2.1"/><rect x="995.7" y="520.9" width="20.3" height="16.9" rx="3.4"/><path d="M999.9 520.9 v-5.1 a5.9 5.9 0 0 1 11.9 0 v5.1"/><circle cx="1005.9" cy="528.5" r="2.0"/><path d="M12.1 585.6 C-15.1 567.5 -8.3 547.1 12.1 560.7 C32.5 547.1 39.3 567.5 12.1 585.6Z"/><g transform="rotate(5 66.1 577.3)"><rect x="44.8" y="564.6" width="42.4" height="25.4" rx="7.4"/><path d="M55.4 575.2 h21.2 M55.4 581.5 h12.7"/></g><path d="M126.7 583.7 Q130.0 591.1 128.0 600.1 Q126.0 609.1 116.4 610.6 Q106.9 612.1 99.5 606.3 Q92.1 600.5 94.0 592.0 Q95.8 583.5 101.8 578.6 Q107.7 573.7 115.6 575.0 Q123.5 576.2 126.7 583.7 Z"/><path d="M195.5 575.3 Q197.0 580.7 196.9 587.9 Q196.8 595.1 189.5 594.6 Q182.3 594.1 176.6 590.9 Q170.8 587.7 171.5 581.0 Q172.1 574.3 177.1 570.6 Q182.2 566.8 188.1 568.3 Q194.0 569.9 195.5 575.3 Z"/><g transform="rotate(3 240.1 590.7)"><rect x="223.2" y="580.6" width="33.9" height="20.3" rx="5.9"/><path d="M231.6 589.0 h16.9 M231.6 594.1 h10.2"/></g><path d="M282.8 606.2 C259.1 590.4 265.0 572.7 282.8 584.5 C300.5 572.7 306.4 590.4 282.8 606.2Z"/><circle cx="337.0" cy="591.5" r="21.9"/><path d="M337.0 578.3 V591.5 L345.7 598.0"/><g transform="rotate(215 418.3 590.6)"><path d="M418.3 615.0 L401.2 576.0 Q418.3 567.5 435.4 576.0 Z"/><circle cx="415.9" cy="585.8" r="3.7"/><circle cx="422.0" cy="596.7" r="2.9"/></g><path d="M479.7 565.7 Q485.8 570.6 479.9 575.8 Q474.1 581.0 467.8 585.1 Q461.5 589.2 457.6 582.8 Q453.6 576.5 452.1 569.8 Q450.5 563.2 455.9 557.0 Q461.3 550.7 467.4 555.8 Q473.6 560.8 479.7 565.7 Z"/><path d="M498.8 580.8 a5.6 5.6 0 0 1 3.2 -10.4 a8.0 8.0 0 0 1 14.5 -3.2 a6.4 6.4 0 0 1 12.9 8.0 a3.2 3.2 0 0 1 1.6 5.6 Z"/><rect x="562.6" y="562.9" width="31.4" height="31.4" rx="4.7"/><path d="M578.3 562.9 V594.3 M562.6 578.6 H594.0"/><circle cx="643.4" cy="572.5" r="14.4"/><path d="M643.4 563.8 V572.5 L649.1 576.8"/><g transform="rotate(24 707.2 574.6)"><rect x="691.4" y="565.2" width="31.4" height="18.9" rx="5.5"/><path d="M699.3 573.0 h15.7 M699.3 577.8 h9.4"/></g><path d="M778.2 575.3 Q782.9 579.2 779.6 584.9 Q776.3 590.5 770.7 589.9 Q765.1 589.2 760.8 586.8 Q756.6 584.4 755.0 578.5 Q753.4 572.5 758.6 568.2 Q763.9 563.9 768.7 567.7 Q773.6 571.4 778.2 575.3 Z"/><path d="M829.1 577.7 Q830.0 585.5 829.1 593.4 Q828.3 601.2 819.8 603.2 Q811.3 605.2 805.6 599.2 Q800.0 593.2 801.2 586.2 Q802.5 579.1 807.0 573.1 Q811.6 567.1 819.9 568.5 Q828.3 569.8 829.1 577.7 Z"/><circle cx="863.7" cy="577.8" r="18.0"/><circle cx="863.7" cy="577.8" r="14.1"/><path d="M863.7 577.8 L877.7 577.8"/><path d="M863.7 577.8 L868.0 591.1"/><path d="M863.7 577.8 L852.3 586.0"/><path d="M863.7 577.8 L852.3 569.5"/><path d="M863.7 577.8 L868.0 564.4"/><path d="M950.0 582.8 Q951.1 587.8 949.3 592.0 Q947.5 596.3 942.7 598.5 Q937.9 600.7 934.8 596.5 Q931.7 592.2 931.7 587.8 Q931.7 583.4 935.1 580.6 Q938.5 577.7 943.7 577.7 Q948.9 577.7 950.0 582.8 Z"/><circle cx="994.1" cy="576.4" r="21.1"/><path d="M984.6 580.6 Q994.1 589.1 1003.6 580.6"/><circle cx="986.8" cy="571.2" r="2.1"/><circle cx="1001.5" cy="571.2" r="2.1"/><g transform="rotate(70 21.4 632.4)"><rect x="-0.6" y="626.9" width="44.0" height="11.0" rx="2"/><path d="M-0.6 626.9 L-9.4 632.4 L-0.6 637.9"/></g><circle cx="76.7" cy="642.7" r="25.8"/><path d="M65.1 647.9 Q76.7 658.2 88.3 647.9"/><circle cx="67.7" cy="636.2" r="2.6"/><circle cx="85.7" cy="636.2" r="2.6"/><path d="M143.3 650.1 C126.4 638.8 130.7 626.1 143.3 634.6 C156.0 626.1 160.2 638.8 143.3 650.1Z"/><path d="M217.9 632.8 Q220.4 639.0 218.2 645.6 Q215.9 652.2 208.3 656.0 Q200.7 659.8 195.6 653.0 Q190.6 646.2 190.4 639.0 Q190.3 631.7 195.7 626.0 Q201.1 620.2 208.2 623.4 Q215.4 626.6 217.9 632.8 Z"/><path d="M272.1 668.8 C246.4 651.7 252.8 632.3 272.1 645.2 C291.4 632.3 297.9 651.7 272.1 668.8Z"/><polygon points="330.7,631.4 332.9,638.1 339.7,640.4 332.9,642.6 330.7,649.4 328.4,642.6 321.7,640.4 328.4,638.1"/><g transform="rotate(247 368.0 639.6)"><path d="M368.0 657.4 L355.5 628.9 Q368.0 622.6 380.5 628.9 Z"/><circle cx="366.3" cy="636.0" r="2.7"/><circle cx="370.7" cy="644.0" r="2.1"/></g><g transform="rotate(42 442.9 638.5)"><rect x="421.8" y="633.2" width="42.3" height="10.6" rx="2"/><path d="M421.8 633.2 L413.3 638.5 L421.8 643.8"/></g><circle cx="482.1" cy="636.2" r="20.6"/><path d="M472.9 640.3 Q482.1 648.5 491.4 640.3"/><circle cx="474.9" cy="631.1" r="2.1"/><circle cx="489.3" cy="631.1" r="2.1"/><rect x="527.1" y="633.8" width="34.2" height="22.3" rx="4.3"/><circle cx="544.2" cy="644.9" r="6.8"/><circle cx="544.2" cy="644.9" r="3.4"/><g transform="rotate(-13 610.2 647.9)"><rect x="593.1" y="637.6" width="34.3" height="20.6" rx="6.0"/><path d="M601.7 646.2 h17.1 M601.7 651.3 h10.3"/></g><circle cx="669.7" cy="644.0" r="24.5"/><path d="M658.7 648.9 Q669.7 658.7 680.7 648.9"/><circle cx="661.1" cy="637.9" r="2.4"/><circle cx="678.3" cy="637.9" r="2.4"/><polygon points="716.0,618.0 718.6,625.7 726.3,628.3 718.6,630.8 716.0,638.5 713.5,630.8 705.8,628.3 713.5,625.7"/><polygon points="783.1,633.6 785.7,641.6 793.7,644.2 785.7,646.9 783.1,654.9 780.5,646.9 772.5,644.2 780.5,641.6"/><rect x="821.5" y="626.3" width="43.0" height="27.9" rx="5.4"/><circle cx="842.9" cy="640.3" r="8.6"/><circle cx="842.9" cy="640.3" r="4.3"/><path d="M862.7 645.4 a8.3 8.3 0 0 1 4.8 -15.5 a11.9 11.9 0 0 1 21.5 -4.8 a9.5 9.5 0 0 1 19.1 11.9 a4.8 4.8 0 0 1 2.4 8.3 Z"/><g transform="rotate(7 963.7 645.9)"><rect x="948.6" y="636.8" width="30.1" height="18.1" rx="5.3"/><path d="M956.1 644.4 h15.1 M956.1 648.9 h9.0"/></g><g transform="rotate(168 1005.8 631.1)"><rect x="985.8" y="626.1" width="39.9" height="10.0" rx="2"/><path d="M985.8 626.1 L977.9 631.1 L985.8 636.1"/></g><path d="M9.3 718.3 C-12.1 704.0 -6.7 688.0 9.3 698.7 C25.3 688.0 30.6 704.0 9.3 718.3Z"/><path d="M57.1 714.0 C38.4 701.6 43.1 687.6 57.1 696.9 C71.1 687.6 75.7 701.6 57.1 714.0Z"/><circle cx="123.2" cy="698.8" r="15.7"/><circle cx="123.2" cy="698.8" r="12.3"/><path d="M123.2 698.8 L135.4 698.8"/><path d="M123.2 698.8 L126.9 710.5"/><path d="M123.2 698.8 L113.2 706.0"/><path d="M123.2 698.8 L113.2 691.6"/><path d="M123.2 698.8 L126.9 687.1"/><path d="M172.7 714.1 C155.9 702.9 160.1 690.2 172.7 698.6 C185.4 690.2 189.6 702.9 172.7 714.1Z"/><g transform="rotate(-6 229.5 696.7)"><rect x="210.8" y="685.5" width="37.4" height="22.5" rx="6.6"/><path d="M220.1 694.8 h18.7 M220.1 700.5 h11.2"/></g><path d="M289.2 725.9 C262.6 708.2 269.3 688.3 289.2 701.5 C309.2 688.3 315.8 708.2 289.2 725.9Z"/><rect x="336.5" y="698.8" width="35.1" height="22.8" rx="4.4"/><circle cx="354.1" cy="710.2" r="7.0"/><circle cx="354.1" cy="710.2" r="3.5"/><path d="M409.5 700.1 Q414.3 706.0 409.4 711.6 Q404.4 717.3 398.3 718.6 Q392.1 719.9 385.0 717.2 Q377.9 714.4 379.2 706.6 Q380.5 698.8 386.6 696.5 Q392.6 694.2 398.6 694.3 Q404.6 694.3 409.5 700.1 Z"/><path d="M447.4 692.0 a7.3 7.3 0 0 1 4.2 -13.5 a10.4 10.4 0 0 1 18.7 -4.2 a8.3 8.3 0 0 1 16.6 10.4 a4.2 4.2 0 0 1 2.1 7.3 Z"/><g transform="rotate(100 533.5 706.8)"><rect x="514.0" y="701.9" width="39.1" height="9.8" rx="2"/><path d="M514.0 701.9 L506.2 706.8 L514.0 711.7"/></g><rect x="568.8" y="664.6" width="46.8" height="46.8" rx="7.0"/><path d="M592.2 664.6 V711.3 M568.8 688.0 H615.6"/><g transform="rotate(41 630.0 691.7)"><rect x="606.5" y="685.8" width="47.0" height="11.8" rx="2"/><path d="M606.5 685.8 L597.1 691.7 L606.5 697.6"/></g><circle cx="695.4" cy="693.2" r="23.1"/><path d="M685.0 697.8 Q695.4 707.1 705.8 697.8"/><circle cx="687.4" cy="687.4" r="2.3"/><circle cx="703.5" cy="687.4" r="2.3"/><g transform="rotate(52 753.2 695.7)"><rect x="728.9" y="689.6" width="48.7" height="12.2" rx="2"/><path d="M728.9 689.6 L719.1 695.7 L728.9 701.8"/></g><path d="M813.1 711.6 C786.4 693.7 793.1 673.7 813.1 687.0 C833.2 673.7 839.9 693.7 813.1 711.6Z"/><polygon points="866.2,679.7 868.6,687.2 876.1,689.7 868.6,692.2 866.2,699.7 863.7,692.2 856.2,689.7 863.7,687.2"/><path d="M939.9 691.4 Q941.2 697.9 938.3 702.3 Q935.4 706.8 930.0 710.5 Q924.6 714.3 920.7 708.8 Q916.8 703.4 915.5 697.3 Q914.3 691.1 919.6 687.0 Q924.9 683.0 931.8 683.9 Q938.7 684.9 939.9 691.4 Z"/><rect x="953.2" y="671.6" width="38.8" height="38.8" rx="5.8"/><path d="M972.6 671.6 V710.4 M953.2 691.0 H992.0"/><rect x="25.0" y="748.4" width="27.9" height="23.2" rx="4.6"/><path d="M30.8 748.4 v-7.0 a8.1 8.1 0 0 1 16.3 0 v7.0"/><circle cx="38.9" cy="758.8" r="2.8"/><rect x="66.2" y="720.2" width="42.6" height="42.6" rx="6.4"/><path d="M87.5 720.2 V762.8 M66.2 741.5 H108.8"/><circle cx="144.7" cy="745.3" r="14.4"/><circle cx="144.7" cy="745.3" r="11.2"/><path d="M144.7 745.3 L155.9 745.3"/><path d="M144.7 745.3 L148.1 755.9"/><path d="M144.7 745.3 L135.6 751.8"/><path d="M144.7 745.3 L135.6 738.7"/><path d="M144.7 745.3 L148.1 734.6"/><circle cx="197.7" cy="751.9" r="20.2"/><circle cx="197.7" cy="751.9" r="15.8"/><path d="M197.7 751.9 L213.5 751.9"/><path d="M197.7 751.9 L202.6 766.9"/><path d="M197.7 751.9 L185.0 761.1"/><path d="M197.7 751.9 L185.0 742.6"/><path d="M197.7 751.9 L202.6 736.9"/><circle cx="262.3" cy="748.8" r="22.0"/><path d="M252.5 753.2 Q262.3 762.0 272.2 753.2"/><circle cx="254.7" cy="743.3" r="2.2"/><circle cx="270.0" cy="743.3" r="2.2"/><rect x="296.9" y="743.7" width="24.5" height="20.4" rx="4.1"/><path d="M302.0 743.7 v-6.1 a7.1 7.1 0 0 1 14.3 0 v6.1"/><circle cx="309.1" cy="752.9" r="2.5"/><g transform="rotate(149 375.6 743.8)"><path d="M375.6 760.5 L363.9 733.8 Q375.6 728.0 387.3 733.8 Z"/><circle cx="373.9" cy="740.5" r="2.5"/><circle cx="378.1" cy="748.0" r="2.0"/></g><circle cx="431.4" cy="757.1" r="14.5"/><circle cx="431.4" cy="757.1" r="11.3"/><path d="M431.4 757.1 L442.7 757.1"/><path d="M431.4 757.1 L434.9 767.9"/><path d="M431.4 757.1 L422.2 763.8"/><path d="M431.4 757.1 L422.2 750.5"/><path d="M431.4 757.1 L434.9 746.4"/><polygon points="479.7,746.7 482.4,755.0 490.6,757.7 482.4,760.3 479.7,768.6 477.0,760.3 468.8,757.7 477.0,755.0"/><path d="M559.0 751.3 Q560.7 758.8 557.2 764.0 Q553.7 769.3 547.4 773.2 Q541.2 777.1 536.3 771.3 Q531.4 765.5 529.8 758.0 Q528.3 750.6 535.2 747.6 Q542.1 744.6 549.7 744.2 Q557.2 743.9 559.0 751.3 Z"/><g transform="rotate(-4 598.4 753.8)"><rect x="579.8" y="742.6" width="37.2" height="22.3" rx="6.5"/><path d="M589.1 751.9 h18.6 M589.1 757.5 h11.2"/></g><rect x="645.1" y="750.2" width="31.8" height="20.7" rx="4.0"/><circle cx="661.0" cy="760.5" r="6.4"/><circle cx="661.0" cy="760.5" r="3.2"/><g transform="rotate(61 722.3 753.3)"><rect x="704.1" y="748.8" width="36.4" height="9.1" rx="2"/><path d="M704.1 748.8 L696.8 753.3 L704.1 757.9"/></g><path d="M797.7 754.8 Q802.3 760.8 798.1 767.3 Q793.9 773.8 786.3 778.1 Q778.6 782.5 773.4 775.4 Q768.2 768.2 765.6 759.6 Q763.0 750.9 770.8 744.8 Q778.5 738.6 785.8 743.7 Q793.1 748.8 797.7 754.8 Z"/><rect x="843.7" y="764.1" width="17.6" height="14.7" rx="2.9"/><path d="M847.3 764.1 v-4.4 a5.1 5.1 0 0 1 10.3 0 v4.4"/><circle cx="852.5" cy="770.7" r="1.8"/><g transform="rotate(-9 898.9 756.4)"><rect x="876.2" y="742.8" width="45.3" height="27.2" rx="7.9"/><path d="M887.6 754.1 h22.6 M887.6 760.9 h13.6"/></g><path d="M920.3 750.9 a8.6 8.6 0 0 1 4.9 -16.1 a12.4 12.4 0 0 1 22.2 -4.9 a9.9 9.9 0 0 1 19.8 12.4 a4.9 4.9 0 0 1 2.5 8.6 Z"/><g transform="rotate(98 1016.8 747.3)"><rect x="995.1" y="741.9" width="43.4" height="10.9" rx="2"/><path d="M995.1 741.9 L986.4 747.3 L995.1 752.8"/></g><g transform="rotate(110 3.2 824.7)"><path d="M3.2 839.1 L-6.8 816.1 Q3.2 811.1 13.3 816.1 Z"/><circle cx="1.8" cy="821.9" r="2.2"/><circle cx="5.4" cy="828.3" r="1.7"/></g><path d="M78.4 807.9 Q79.0 815.6 76.5 820.8 Q74.0 826.0 67.9 829.0 Q61.9 831.9 56.2 827.4 Q50.6 822.8 48.6 814.6 Q46.6 806.4 54.3 803.1 Q62.0 799.9 69.9 800.0 Q77.9 800.2 78.4 807.9 Z"/><g transform="rotate(-24 121.1 805.6)"><rect x="102.8" y="794.6" width="36.6" height="22.0" rx="6.4"/><path d="M112.0 803.8 h18.3 M112.0 809.3 h11.0"/></g><rect x="147.1" y="793.1" width="34.2" height="22.2" rx="4.3"/><circle cx="164.2" cy="804.2" r="6.8"/><circle cx="164.2" cy="804.2" r="3.4"/><rect x="210.1" y="798.5" width="28.1" height="28.1" rx="4.2"/><path d="M224.2 798.5 V826.6 M210.1 812.6 H238.2"/><g transform="rotate(10 291.3 821.8)"><rect x="269.8" y="808.9" width="43.0" height="25.8" rx="7.5"/><path d="M280.6 819.6 h21.5 M280.6 826.1 h12.9"/></g><path d="M341.6 824.2 a6.0 6.0 0 0 1 3.4 -11.2 a8.6 8.6 0 0 1 15.5 -3.4 a6.9 6.9 0 0 1 13.7 8.6 a3.4 3.4 0 0 1 1.7 6.0 Z"/><path d="M410.4 791.3 Q414.5 798.5 411.5 807.2 Q408.6 815.8 399.5 817.3 Q390.3 818.8 385.9 811.9 Q381.5 805.0 379.7 797.6 Q377.8 790.3 384.4 785.8 Q390.9 781.2 398.7 782.7 Q406.4 784.1 410.4 791.3 Z"/><g transform="rotate(-10 460.3 806.0)"><rect x="443.5" y="795.9" width="33.7" height="20.2" rx="5.9"/><path d="M451.9 804.3 h16.8 M451.9 809.4 h10.1"/></g><circle cx="518.1" cy="817.8" r="24.5"/><circle cx="518.1" cy="817.8" r="19.1"/><path d="M518.1 817.8 L537.3 817.8"/><path d="M518.1 817.8 L524.1 836.0"/><path d="M518.1 817.8 L502.7 829.0"/><path d="M518.1 817.8 L502.7 806.5"/><path d="M518.1 817.8 L524.1 799.6"/><circle cx="593.7" cy="820.9" r="15.4"/><path d="M593.7 811.7 V820.9 L599.8 825.5"/><g transform="rotate(14 636.6 819.6)"><rect x="622.2" y="810.9" width="29.0" height="17.4" rx="5.1"/><path d="M629.4 818.2 h14.5 M629.4 822.5 h8.7"/></g><path d="M706.3 836.9 C684.5 822.4 689.9 806.0 706.3 816.9 C722.6 806.0 728.0 822.4 706.3 836.9Z"/><rect x="734.1" y="801.7" width="34.1" height="34.1" rx="5.1"/><path d="M751.1 801.7 V835.7 M734.1 818.7 H768.2"/><path d="M799.6 814.8 a5.7 5.7 0 0 1 3.2 -10.5 a8.1 8.1 0 0 1 14.6 -3.2 a6.5 6.5 0 0 1 13.0 8.1 a3.2 3.2 0 0 1 1.6 5.7 Z"/><circle cx="880.0" cy="803.7" r="20.8"/><circle cx="880.0" cy="803.7" r="16.2"/><path d="M880.0 803.7 L896.2 803.7"/><path d="M880.0 803.7 L885.0 819.2"/><path d="M880.0 803.7 L866.8 813.3"/><path d="M880.0 803.7 L866.8 794.2"/><path d="M880.0 803.7 L885.0 788.3"/><rect x="911.6" y="815.4" width="28.3" height="23.6" rx="4.7"/><path d="M917.5 815.4 v-7.1 a8.3 8.3 0 0 1 16.5 0 v7.1"/><circle cx="925.8" cy="826.1" r="2.8"/><circle cx="975.5" cy="808.6" r="16.8"/><path d="M975.5 798.5 V808.6 L982.2 813.6"/><circle cx="20.2" cy="856.4" r="17.2"/><circle cx="20.2" cy="856.4" r="13.4"/><path d="M20.2 856.4 L33.6 856.4"/><path d="M20.2 856.4 L24.3 869.2"/><path d="M20.2 856.4 L9.3 864.3"/><path d="M20.2 856.4 L9.3 848.5"/><path d="M20.2 856.4 L24.3 843.6"/><rect x="62.0" y="844.4" width="37.3" height="37.3" rx="5.6"/><path d="M80.6 844.4 V881.7 M62.0 863.1 H99.2"/><g transform="rotate(30 150.0 859.9)"><rect x="127.5" y="854.2" width="45.1" height="11.3" rx="2"/><path d="M127.5 854.2 L118.4 859.9 L127.5 865.5"/></g><g transform="rotate(61 213.4 861.4)"><path d="M213.4 884.2 L197.4 847.8 Q213.4 839.8 229.3 847.8 Z"/><circle cx="211.1" cy="856.9" r="3.4"/><circle cx="216.8" cy="867.1" r="2.7"/></g><g transform="rotate(-21 258.3 881.3)"><rect x="242.3" y="871.7" width="32.1" height="19.3" rx="5.6"/><path d="M250.3 879.7 h16.1 M250.3 884.5 h9.6"/></g><circle cx="313.7" cy="878.4" r="16.7"/><path d="M313.7 868.4 V878.4 L320.3 883.4"/><circle cx="383.2" cy="867.4" r="25.8"/><circle cx="383.2" cy="867.4" r="20.1"/><path d="M383.2 867.4 L403.3 867.4"/><path d="M383.2 867.4 L389.4 886.5"/><path d="M383.2 867.4 L366.9 879.2"/><path d="M383.2 867.4 L366.9 855.6"/><path d="M383.2 867.4 L389.4 848.3"/><circle cx="431.9" cy="875.4" r="23.6"/><path d="M431.9 861.3 V875.4 L441.3 882.5"/><circle cx="483.1" cy="860.9" r="20.7"/><path d="M473.8 865.0 Q483.1 873.3 492.4 865.0"/><circle cx="475.9" cy="855.7" r="2.1"/><circle cx="490.3" cy="855.7" r="2.1"/><path d="M571.1 876.5 Q573.4 880.7 570.7 884.3 Q568.0 888.0 563.6 890.5 Q559.3 893.1 556.1 889.1 Q553.0 885.1 551.6 880.0 Q550.3 875.0 555.0 872.5 Q559.7 870.0 564.2 871.1 Q568.8 872.3 571.1 876.5 Z"/><rect x="596.1" y="864.2" width="24.8" height="20.7" rx="4.1"/><path d="M601.3 864.2 v-6.2 a7.2 7.2 0 0 1 14.5 0 v6.2"/><circle cx="608.5" cy="873.5" r="2.5"/><circle cx="657.2" cy="856.2" r="22.0"/><path d="M657.2 843.0 V856.2 L666.1 862.8"/><circle cx="711.1" cy="865.4" r="26.0"/><circle cx="711.1" cy="865.4" r="20.3"/><path d="M711.1 865.4 L731.4 865.4"/><path d="M711.1 865.4 L717.4 884.7"/><path d="M711.1 865.4 L694.7 877.3"/><path d="M711.1 865.4 L694.7 853.5"/><path d="M711.1 865.4 L717.4 846.2"/><g transform="rotate(-3 774.7 880.3)"><rect x="760.3" y="871.7" width="28.8" height="17.3" rx="5.0"/><path d="M767.5 878.8 h14.4 M767.5 883.2 h8.6"/></g><path d="M849.6 880.3 C829.7 867.1 834.7 852.2 849.6 862.1 C864.5 852.2 869.5 867.1 849.6 880.3Z"/><rect x="891.9" y="877.4" width="20.8" height="17.3" rx="3.5"/><path d="M896.2 877.4 v-5.2 a6.1 6.1 0 0 1 12.1 0 v5.2"/><circle cx="902.3" cy="885.2" r="2.1"/><circle cx="969.3" cy="880.2" r="20.9"/><path d="M959.9 884.4 Q969.3 892.7 978.7 884.4"/><circle cx="962.0" cy="875.0" r="2.1"/><circle cx="976.6" cy="875.0" r="2.1"/><polygon points="1027.3,848.2 1029.6,855.0 1036.5,857.3 1029.6,859.6 1027.3,866.5 1025.1,859.6 1018.2,857.3 1025.1,855.0"/><polygon points="4.9,913.3 6.9,919.5 13.1,921.6 6.9,923.6 4.9,929.8 2.9,923.6 -3.3,921.6 2.9,919.5"/><path d="M67.2 910.1 Q69.4 914.3 68.1 919.5 Q66.7 924.8 61.4 924.6 Q56.1 924.5 52.6 921.6 Q49.1 918.8 47.3 913.4 Q45.5 908.1 50.6 905.4 Q55.8 902.8 60.4 904.4 Q65.1 905.9 67.2 910.1 Z"/><circle cx="116.9" cy="932.6" r="25.2"/><path d="M105.5 937.7 Q116.9 947.8 128.2 937.7"/><circle cx="108.0" cy="926.3" r="2.5"/><circle cx="125.7" cy="926.3" r="2.5"/><path d="M186.3 931.8 Q189.9 937.5 184.9 941.6 Q180.0 945.6 175.2 948.5 Q170.4 951.3 166.6 947.0 Q162.9 942.6 162.4 937.3 Q161.9 931.9 166.3 928.5 Q170.7 925.1 176.7 925.6 Q182.6 926.0 186.3 931.8 Z"/><circle cx="240.7" cy="924.2" r="18.2"/><path d="M232.5 927.9 Q240.7 935.2 248.9 927.9"/><circle cx="234.3" cy="919.6" r="1.8"/><circle cx="247.1" cy="919.6" r="1.8"/><path d="M262.7 947.8 a7.4 7.4 0 0 1 4.2 -13.7 a10.6 10.6 0 0 1 19.0 -4.2 a8.5 8.5 0 0 1 16.9 10.6 a4.2 4.2 0 0 1 2.1 7.4 Z"/><g transform="rotate(33 341.4 920.0)"><rect x="324.9" y="915.8" width="33.1" height="8.3" rx="2"/><path d="M324.9 915.8 L318.3 920.0 L324.9 924.1"/></g><g transform="rotate(39 407.3 933.0)"><rect x="389.1" y="928.5" width="36.3" height="9.1" rx="2"/><path d="M389.1 928.5 L381.9 933.0 L389.1 937.6"/></g><path d="M462.1 920.4 Q464.8 923.8 462.2 927.3 Q459.5 930.7 455.8 931.7 Q452.0 932.7 446.7 931.3 Q441.4 929.9 441.7 923.9 Q442.0 918.0 446.6 914.6 Q451.1 911.2 455.3 914.1 Q459.4 917.0 462.1 920.4 Z"/><circle cx="512.9" cy="915.9" r="20.9"/><path d="M503.5 920.1 Q512.9 928.4 522.3 920.1"/><circle cx="505.6" cy="910.6" r="2.1"/><circle cx="520.2" cy="910.6" r="2.1"/><rect x="555.0" y="915.3" width="40.0" height="26.0" rx="5.0"/><circle cx="575.0" cy="928.3" r="8.0"/><circle cx="575.0" cy="928.3" r="4.0"/><rect x="636.9" y="937.4" width="17.8" height="14.8" rx="3.0"/><path d="M640.7 937.4 v-4.5 a5.2 5.2 0 0 1 10.4 0 v4.5"/><circle cx="645.9" cy="944.1" r="1.8"/><g transform="rotate(134 692.9 939.8)"><rect x="669.6" y="934.0" width="46.7" height="11.7" rx="2"/><path d="M669.6 934.0 L660.3 939.8 L669.6 945.6"/></g><rect x="742.8" y="893.2" width="49.9" height="49.9" rx="7.5"/><path d="M767.7 893.2 V943.1 M742.8 918.1 H792.6"/><g transform="rotate(321 799.5 931.3)"><path d="M799.5 955.9 L782.3 916.5 Q799.5 907.8 816.8 916.5 Z"/><circle cx="797.1" cy="926.3" r="3.7"/><circle cx="803.2" cy="937.4" r="3.0"/></g><circle cx="867.9" cy="941.1" r="15.5"/><path d="M860.9 944.2 Q867.9 950.4 874.8 944.2"/><circle cx="862.5" cy="937.3" r="1.5"/><circle cx="873.3" cy="937.3" r="1.5"/><path d="M947.3 929.6 Q951.6 934.8 948.3 941.3 Q945.0 947.8 938.2 948.7 Q931.3 949.7 924.7 946.3 Q918.0 942.9 918.1 934.9 Q918.3 926.9 924.5 922.2 Q930.7 917.6 936.9 920.9 Q943.1 924.3 947.3 929.6 Z"/><path d="M989.6 943.4 C964.2 926.5 970.5 907.5 989.6 920.2 C1008.6 907.5 1014.9 926.5 989.6 943.4Z"/><circle cx="907.4" cy="132.9" r="3.7"/><circle cx="967.1" cy="645.7" r="3.3"/><circle cx="717.6" cy="865.7" r="3.5"/><circle cx="844.9" cy="110.9" r="5.0"/><circle cx="478.3" cy="204.9" r="4.6"/><circle cx="632.3" cy="820.5" r="4.6"/><circle cx="776.9" cy="447.7" r="5.0"/><circle cx="63.1" cy="761.3" r="4.3"/><circle cx="244.2" cy="706.3" r="3.6"/><circle cx="522.4" cy="757.4" r="3.0"/><circle cx="272.4" cy="563.2" r="2.7"/><circle cx="540.6" cy="688.7" r="3.7"/><circle cx="235.5" cy="700.0" r="4.6"/><circle cx="750.8" cy="480.6" r="4.8"/><circle cx="776.0" cy="132.8" r="3.4"/><circle cx="97.7" cy="32.2" r="3.4"/><circle cx="842.4" cy="729.6" r="2.8"/><circle cx="177.0" cy="340.1" r="4.6"/><circle cx="601.0" cy="789.1" r="2.7"/><circle cx="962.2" cy="180.9" r="4.1"/><circle cx="853.8" cy="636.7" r="3.0"/><circle cx="651.0" cy="376.9" r="2.5"/><circle cx="330.7" cy="275.9" r="4.1"/><circle cx="271.3" cy="527.7" r="4.2"/><circle cx="176.0" cy="112.0" r="4.2"/><circle cx="454.3" cy="113.0" r="2.8"/><circle cx="916.6" cy="533.8" r="3.4"/><circle cx="191.1" cy="870.5" r="4.2"/><circle cx="717.1" cy="315.3" r="3.3"/><circle cx="397.6" cy="128.0" r="4.1"/><circle cx="413.7" cy="717.6" r="3.5"/><circle cx="444.9" cy="443.2" r="4.9"/><circle cx="337.3" cy="615.7" r="3.1"/><circle cx="564.2" cy="249.3" r="4.7"/><circle cx="279.0" cy="747.7" r="4.2"/><circle cx="443.1" cy="817.0" r="3.5"/><circle cx="724.0" cy="526.1" r="3.6"/><circle cx="62.5" cy="366.7" r="3.2"/><circle cx="429.4" cy="835.2" r="3.2"/><circle cx="676.8" cy="588.1" r="3.1"/><circle cx="400.8" cy="115.6" r="4.7"/><circle cx="245.1" cy="368.1" r="3.4"/><circle cx="799.2" cy="744.0" r="4.0"/><circle cx="531.7" cy="87.0" r="4.7"/><circle cx="86.1" cy="318.1" r="3.4"/><circle cx="704.3" cy="585.5" r="3.4"/><circle cx="874.6" cy="831.0" r="2.6"/><circle cx="616.5" cy="410.5" r="3.4"/><circle cx="452.8" cy="276.5" r="4.2"/><circle cx="589.8" cy="849.1" r="4.9"/><circle cx="966.8" cy="345.7" r="4.6"/><circle cx="633.1" cy="613.4" r="5.0"/><circle cx="64.8" cy="404.4" r="3.5"/><circle cx="639.0" cy="190.8" r="5.0"/><circle cx="204.0" cy="323.7" r="2.9"/><circle cx="384.4" cy="649.1" r="2.7"/><circle cx="162.5" cy="567.8" r="4.1"/><circle cx="722.7" cy="221.7" r="4.5"/><circle cx="711.9" cy="679.0" r="2.8"/><circle cx="456.5" cy="13.8" r="4.6"/><circle cx="920.0" cy="783.8" r="2.6"/><circle cx="342.0" cy="468.9" r="3.8"/><circle cx="108.3" cy="690.6" r="3.3"/><circle cx="494.1" cy="109.0" r="3.9"/><circle cx="126.3" cy="77.3" r="3.8"/><circle cx="286.3" cy="680.3" r="3.1"/><circle cx="403.2" cy="47.5" r="3.0"/><circle cx="439.9" cy="488.4" r="3.6"/><circle cx="828.6" cy="91.3" r="4.6"/><circle cx="150.8" cy="849.0" r="3.8"/><circle cx="395.9" cy="535.7" r="4.7"/><circle cx="938.7" cy="361.7" r="2.5"/><circle cx="149.7" cy="716.1" r="4.3"/><circle cx="694.1" cy="137.0" r="3.8"/><circle cx="27.8" cy="96.5" r="3.3"/><circle cx="941.1" cy="562.7" r="4.6"/><circle cx="44.9" cy="364.1" r="2.7"/><circle cx="254.0" cy="97.8" r="4.8"/><circle cx="320.2" cy="427.9" r="4.1"/><circle cx="863.6" cy="828.1" r="3.9"/><circle cx="487.9" cy="790.9" r="3.5"/><circle cx="291.6" cy="646.9" r="3.1"/><circle cx="358.3" cy="375.6" r="3.7"/><circle cx="349.2" cy="376.7" r="3.6"/><circle cx="48.3" cy="731.2" r="2.7"/><circle cx="514.1" cy="479.1" r="3.5"/><circle cx="216.9" cy="86.8" r="3.4"/><circle cx="306.2" cy="423.5" r="3.1"/><circle cx="730.0" cy="426.5" r="2.5"/><circle cx="396.0" cy="845.5" r="2.5"/><circle cx="577.9" cy="840.7" r="3.4"/><circle cx="582.5" cy="322.8" r="3.3"/><circle cx="593.4" cy="515.8" r="3.3"/><circle cx="484.7" cy="451.7" r="4.4"/><circle cx="51.7" cy="81.2" r="3.1"/><circle cx="263.1" cy="696.2" r="3.6"/><circle cx="837.7" cy="352.0" r="3.2"/><circle cx="662.2" cy="74.8" r="5.0"/><circle cx="809.9" cy="287.2" r="3.3"/><circle cx="798.1" cy="689.8" r="4.1"/><circle cx="55.3" cy="668.1" r="2.6"/><circle cx="608.5" cy="483.1" r="4.8"/><circle cx="622.1" cy="19.6" r="4.8"/><circle cx="733.2" cy="507.4" r="2.5"/><circle cx="717.8" cy="366.1" r="4.2"/><circle cx="958.1" cy="802.2" r="2.7"/><circle cx="761.1" cy="385.5" r="4.4"/><circle cx="368.0" cy="391.7" r="3.6"/><circle cx="114.9" cy="279.9" r="4.3"/><circle cx="69.6" cy="101.4" r="4.6"/><circle cx="648.9" cy="479.6" r="2.8"/><circle cx="115.3" cy="271.3" r="4.9"/><circle cx="545.6" cy="807.0" r="3.0"/><circle cx="404.0" cy="469.3" r="4.6"/><circle cx="120.2" cy="764.5" r="3.7"/><circle cx="30.6" cy="377.9" r="3.4"/><circle cx="656.8" cy="812.1" r="3.7"/><circle cx="671.6" cy="339.5" r="4.4"/><circle cx="102.5" cy="649.5" r="2.9"/><circle cx="570.6" cy="176.9" r="3.4"/><circle cx="159.6" cy="306.0" r="4.0"/><circle cx="506.5" cy="340.0" r="3.9"/><circle cx="820.4" cy="313.5" r="4.0"/><circle cx="468.0" cy="858.0" r="3.3"/><circle cx="679.3" cy="204.4" r="3.2"/><circle cx="711.4" cy="503.1" r="3.1"/><circle cx="62.5" cy="721.7" r="3.4"/><circle cx="697.8" cy="378.6" r="4.0"/><circle cx="545.0" cy="853.8" r="4.8"/><circle cx="443.9" cy="426.0" r="3.1"/><circle cx="733.5" cy="89.5" r="3.3"/><circle cx="825.4" cy="30.7" r="4.2"/><circle cx="553.3" cy="482.6" r="3.3"/><circle cx="147.6" cy="832.0" r="4.4"/><circle cx="784.8" cy="85.5" r="4.5"/><circle cx="212.8" cy="174.4" r="3.8"/><circle cx="594.0" cy="105.7" r="4.4"/><circle cx="567.3" cy="787.0" r="4.8"/><circle cx="671.4" cy="318.5" r="4.9"/><circle cx="699.9" cy="254.5" r="4.6"/><circle cx="708.0" cy="231.6" r="3.1"/><circle cx="19.8" cy="470.1" r="3.1"/><circle cx="285.4" cy="221.3" r="2.8"/><circle cx="472.3" cy="238.5" r="3.2"/><circle cx="270.4" cy="445.6" r="4.7"/><circle cx="155.9" cy="752.2" r="4.6"/><circle cx="593.6" cy="475.8" r="4.3"/><circle cx="520.7" cy="577.5" r="4.8"/><circle cx="755.1" cy="227.4" r="2.6"/><circle cx="912.3" cy="317.3" r="4.5"/><circle cx="227.4" cy="396.2" r="3.4"/><circle cx="710.3" cy="825.7" r="3.8"/><circle cx="551.3" cy="305.2" r="3.1"/><circle cx="925.2" cy="96.5" r="4.9"/><circle cx="640.1" cy="62.8" r="4.8"/><circle cx="99.4" cy="494.8" r="2.8"/><circle cx="963.1" cy="270.7" r="4.7"/><circle cx="59.8" cy="583.1" r="2.7"/><circle cx="28.9" cy="499.6" r="5.0"/><circle cx="667.3" cy="748.4" r="4.5"/><circle cx="507.6" cy="67.5" r="3.8"/><circle cx="179.8" cy="460.9" r="3.4"/><circle cx="486.0" cy="172.8" r="4.3"/><circle cx="406.4" cy="425.2" r="2.7"/><circle cx="474.3" cy="487.9" r="4.9"/><circle cx="546.9" cy="118.0" r="3.3"/><circle cx="326.9" cy="614.3" r="4.8"/><circle cx="950.6" cy="831.2" r="4.8"/><circle cx="836.3" cy="818.1" r="2.6"/><circle cx="477.0" cy="516.8" r="4.2"/><circle cx="596.8" cy="536.5" r="4.8"/><circle cx="84.2" cy="454.3" r="4.9"/><circle cx="31.0" cy="97.8" r="4.7"/><circle cx="932.3" cy="21.1" r="2.6"/><circle cx="808.2" cy="602.4" r="3.8"/><circle cx="565.0" cy="662.7" r="4.5"/><circle cx="0.7" cy="59.4" r="4.5"/><circle cx="950.0" cy="729.2" r="3.5"/><circle cx="326.8" cy="303.4" r="2.5"/><circle cx="750.2" cy="229.5" r="4.0"/><circle cx="512.4" cy="293.5" r="4.2"/><circle cx="443.1" cy="205.1" r="4.7"/><circle cx="171.1" cy="131.2" r="3.1"/><circle cx="466.5" cy="685.7" r="3.3"/><circle cx="232.1" cy="572.6" r="3.2"/><circle cx="509.2" cy="223.1" r="4.7"/><circle cx="179.7" cy="203.2" r="3.3"/><circle cx="321.0" cy="635.6" r="4.2"/><circle cx="769.8" cy="472.6" r="2.7"/><circle cx="743.6" cy="213.9" r="3.0"/><circle cx="403.6" cy="866.1" r="3.4"/><circle cx="347.2" cy="797.1" r="5.0"/><circle cx="377.1" cy="118.6" r="4.5"/><circle cx="762.0" cy="295.9" r="4.5"/><circle cx="369.6" cy="251.2" r="4.0"/><circle cx="722.2" cy="416.4" r="4.5"/><circle cx="13.5" cy="436.6" r="3.5"/><circle cx="63.4" cy="800.2" r="2.9"/><circle cx="200.2" cy="768.4" r="4.9"/><circle cx="907.3" cy="299.2" r="4.8"/><circle cx="138.1" cy="625.2" r="4.9"/><circle cx="187.7" cy="118.7" r="4.2"/><circle cx="859.6" cy="635.7" r="4.9"/><circle cx="442.0" cy="325.8" r="2.8"/><circle cx="265.9" cy="821.5" r="2.7"/><circle cx="180.0" cy="304.1" r="2.6"/><circle cx="299.0" cy="160.0" r="2.8"/><circle cx="513.2" cy="472.8" r="3.9"/><circle cx="742.5" cy="460.9" r="4.9"/><circle cx="79.4" cy="195.1" r="2.7"/><circle cx="301.4" cy="665.6" r="4.8"/><circle cx="490.7" cy="140.3" r="3.3"/><circle cx="553.7" cy="257.6" r="4.5"/><circle cx="947.3" cy="402.3" r="4.0"/><circle cx="824.0" cy="406.9" r="3.0"/><circle cx="919.5" cy="855.7" r="2.6"/><circle cx="742.9" cy="350.5" r="2.6"/><circle cx="158.6" cy="151.4" r="4.3"/><circle cx="206.1" cy="17.2" r="3.0"/><circle cx="778.4" cy="436.8" r="4.1"/><circle cx="453.0" cy="159.7" r="2.5"/><circle cx="296.4" cy="36.4" r="3.2"/><circle cx="602.7" cy="323.2" r="3.7"/><circle cx="607.7" cy="277.5" r="3.4"/><circle cx="860.9" cy="508.4" r="3.5"/><circle cx="526.1" cy="402.8" r="3.3"/><circle cx="889.9" cy="204.2" r="4.8"/><circle cx="830.8" cy="771.7" r="2.9"/><circle cx="495.6" cy="861.5" r="3.2"/><circle cx="166.5" cy="633.0" r="3.1"/><circle cx="568.5" cy="137.9" r="4.9"/><circle cx="276.7" cy="84.8" r="4.2"/><circle cx="338.1" cy="489.4" r="3.7"/><circle cx="898.6" cy="449.9" r="3.4"/><circle cx="1.6" cy="434.4" r="3.2"/><circle cx="559.3" cy="552.9" r="3.7"/><circle cx="87.6" cy="435.3" r="3.7"/><circle cx="624.6" cy="848.9" r="3.2"/><circle cx="431.2" cy="74.0" r="4.5"/><circle cx="228.4" cy="725.4" r="4.5"/><circle cx="248.0" cy="790.0" r="3.8"/><circle cx="415.1" cy="485.8" r="4.9"/><circle cx="477.1" cy="421.9" r="3.2"/><circle cx="819.3" cy="440.1" r="3.4"/><circle cx="191.4" cy="188.3" r="4.6"/><circle cx="782.6" cy="856.3" r="4.8"/><circle cx="667.3" cy="697.7" r="4.3"/><circle cx="788.6" cy="701.1" r="2.9"/><circle cx="793.5" cy="265.4" r="3.1"/><circle cx="895.6" cy="20.0" r="3.8"/><circle cx="334.2" cy="692.8" r="4.0"/><circle cx="887.4" cy="815.9" r="4.1"/><circle cx="62.8" cy="583.8" r="2.8"/><circle cx="956.6" cy="762.4" r="3.3"/><circle cx="181.1" cy="607.5" r="4.4"/><circle cx="959.4" cy="545.0" r="2.8"/><circle cx="707.8" cy="51.2" r="4.7"/><circle cx="748.7" cy="687.2" r="4.7"/><circle cx="554.3" cy="825.5" r="4.1"/><circle cx="479.1" cy="336.4" r="3.4"/><circle cx="22.3" cy="140.9" r="4.5"/><circle cx="222.8" cy="571.9" r="4.4"/><circle cx="676.4" cy="451.3" r="3.3"/><circle cx="265.8" cy="163.9" r="4.1"/><circle cx="668.4" cy="824.4" r="3.3"/><circle cx="903.0" cy="797.6" r="3.2"/><circle cx="927.3" cy="542.0" r="4.9"/><circle cx="754.0" cy="291.6" r="3.2"/><circle cx="509.0" cy="426.9" r="2.6"/><circle cx="840.1" cy="468.5" r="3.7"/><circle cx="725.2" cy="218.6" r="3.0"/><circle cx="565.7" cy="211.2" r="3.3"/><circle cx="68.1" cy="45.6" r="3.4"/><circle cx="513.2" cy="830.3" r="4.1"/><circle cx="403.6" cy="355.9" r="3.1"/><circle cx="461.6" cy="839.2" r="2.8"/><circle cx="421.7" cy="599.9" r="4.4"/><circle cx="540.6" cy="561.0" r="4.8"/><circle cx="879.1" cy="219.8" r="3.9"/><circle cx="971.4" cy="461.8" r="3.0"/><circle cx="746.2" cy="49.8" r="2.9"/><circle cx="537.0" cy="238.5" r="4.3"/><circle cx="707.9" cy="279.4" r="4.4"/><circle cx="630.9" cy="617.7" r="3.6"/><circle cx="421.2" cy="93.3" r="3.7"/><circle cx="929.9" cy="777.4" r="2.6"/><circle cx="69.2" cy="235.7" r="4.2"/><circle cx="426.2" cy="111.9" r="3.6"/><circle cx="558.3" cy="651.2" r="3.5"/><circle cx="632.8" cy="596.2" r="4.0"/><circle cx="45.2" cy="621.7" r="2.8"/><circle cx="53.3" cy="414.5" r="2.5"/><circle cx="71.0" cy="342.1" r="3.7"/><circle cx="102.9" cy="834.5" r="4.6"/><circle cx="474.0" cy="514.3" r="3.3"/><circle cx="958.1" cy="104.9" r="3.3"/><circle cx="215.2" cy="757.5" r="3.8"/><circle cx="399.8" cy="349.0" r="4.7"/><circle cx="250.7" cy="692.4" r="4.3"/><circle cx="436.7" cy="320.1" r="3.6"/><circle cx="441.2" cy="276.1" r="4.1"/><circle cx="400.5" cy="265.7" r="4.4"/><circle cx="443.3" cy="414.4" r="4.7"/><circle cx="442.8" cy="329.0" r="4.7"/><circle cx="951.0" cy="687.5" r="3.5"/><circle cx="653.7" cy="648.3" r="3.2"/><circle cx="705.2" cy="831.1" r="4.1"/><circle cx="651.4" cy="380.7" r="4.1"/><circle cx="220.1" cy="674.1" r="3.8"/><circle cx="954.5" cy="299.0" r="4.3"/><circle cx="16.3" cy="364.1" r="4.4"/><circle cx="252.7" cy="536.8" r="3.1"/><circle cx="388.0" cy="869.5" r="3.0"/><circle cx="889.0" cy="52.3" r="4.0"/><circle cx="799.9" cy="732.7" r="3.5"/><circle cx="575.0" cy="623.1" r="4.4"/><circle cx="727.2" cy="506.6" r="3.1"/><circle cx="686.9" cy="491.1" r="3.9"/><circle cx="961.4" cy="119.4" r="4.5"/><circle cx="316.3" cy="635.8" r="4.9"/><circle cx="267.3" cy="496.3" r="3.8"/><circle cx="482.3" cy="146.2" r="4.1"/><circle cx="870.2" cy="580.4" r="3.2"/><circle cx="785.1" cy="367.5" r="2.9"/><circle cx="590.1" cy="402.8" r="3.8"/><circle cx="965.4" cy="498.3" r="4.9"/><circle cx="343.5" cy="664.1" r="2.7"/><circle cx="292.6" cy="605.4" r="4.2"/><circle cx="806.9" cy="332.7" r="3.2"/><circle cx="349.1" cy="470.2" r="2.6"/><circle cx="364.8" cy="575.1" r="2.9"/><circle cx="303.0" cy="763.5" r="4.8"/><circle cx="243.2" cy="155.7" r="2.8"/><circle cx="83.5" cy="694.8" r="4.3"/><circle cx="257.5" cy="428.0" r="4.2"/><circle cx="27.4" cy="716.5" r="4.6"/><circle cx="205.8" cy="615.5" r="4.2"/><circle cx="328.3" cy="768.6" r="3.0"/><circle cx="461.6" cy="274.5" r="3.6"/><circle cx="791.2" cy="498.7" r="4.0"/><circle cx="961.3" cy="195.5" r="3.1"/><circle cx="603.6" cy="131.4" r="4.9"/><circle cx="332.4" cy="385.0" r="3.6"/><circle cx="806.1" cy="800.9" r="4.2"/><circle cx="166.9" cy="310.8" r="4.3"/><circle cx="210.5" cy="772.4" r="4.7"/><circle cx="220.6" cy="318.7" r="3.1"/><circle cx="699.9" cy="41.2" r="4.2"/><circle cx="61.0" cy="736.0" r="3.9"/><circle cx="568.0" cy="83.3" r="2.6"/><circle cx="343.9" cy="861.6" r="4.0"/><circle cx="839.9" cy="54.8" r="2.8"/><circle cx="20.4" cy="609.9" r="2.9"/><circle cx="265.6" cy="583.6" r="4.2"/><circle cx="314.0" cy="409.0" r="3.2"/><circle cx="546.7" cy="311.4" r="3.4"/><circle cx="242.4" cy="255.6" r="3.2"/><circle cx="15.8" cy="271.6" r="4.0"/><circle cx="261.7" cy="98.8" r="4.6"/><circle cx="456.9" cy="447.8" r="3.3"/><circle cx="864.0" cy="659.8" r="4.1"/><circle cx="642.3" cy="605.8" r="3.8"/><circle cx="402.4" cy="341.3" r="3.8"/><circle cx="456.4" cy="462.8" r="3.8"/><circle cx="768.1" cy="781.0" r="3.1"/><circle cx="21.6" cy="263.4" r="2.6"/><circle cx="775.7" cy="542.8" r="3.2"/><circle cx="186.3" cy="760.0" r="4.6"/><circle cx="665.9" cy="605.2" r="4.4"/><circle cx="442.8" cy="347.7" r="3.9"/><circle cx="857.6" cy="867.4" r="4.8"/><circle cx="813.7" cy="65.1" r="3.1"/><circle cx="945.8" cy="475.6" r="3.8"/><circle cx="301.8" cy="754.2" r="3.8"/><circle cx="964.6" cy="66.1" r="5.0"/><circle cx="13.0" cy="129.7" r="3.5"/><circle cx="622.9" cy="96.8" r="3.9"/><circle cx="914.9" cy="381.1" r="4.4"/><circle cx="576.5" cy="509.6" r="2.9"/><circle cx="451.9" cy="787.8" r="4.2"/><circle cx="211.2" cy="391.1" r="3.9"/><circle cx="328.0" cy="505.5" r="4.1"/><circle cx="17.4" cy="192.5" r="4.1"/><circle cx="208.8" cy="63.7" r="4.4"/><circle cx="325.2" cy="838.1" r="3.9"/><circle cx="98.7" cy="557.2" r="3.2"/><circle cx="793.3" cy="633.6" r="4.4"/><circle cx="55.7" cy="29.9" r="4.5"/><circle cx="136.9" cy="176.5" r="2.6"/><circle cx="159.3" cy="414.4" r="4.9"/><circle cx="313.0" cy="226.9" r="4.6"/><circle cx="179.6" cy="555.7" r="4.0"/><circle cx="911.0" cy="38.3" r="3.9"/><circle cx="372.9" cy="720.7" r="3.1"/><circle cx="696.4" cy="162.1" r="3.7"/><circle cx="943.2" cy="209.9" r="3.2"/><circle cx="893.7" cy="590.2" r="2.7"/><circle cx="181.6" cy="207.5" r="3.2"/><circle cx="822.6" cy="613.0" r="4.9"/><circle cx="652.3" cy="549.4" r="3.5"/><circle cx="698.7" cy="431.8" r="2.6"/><circle cx="479.2" cy="336.1" r="3.8"/><circle cx="47.5" cy="24.4" r="5.0"/><circle cx="361.6" cy="288.8" r="2.9"/><circle cx="577.1" cy="800.4" r="3.0"/><circle cx="487.2" cy="437.2" r="4.4"/><circle cx="550.4" cy="209.0" r="3.0"/><circle cx="705.8" cy="68.4" r="4.7"/><circle cx="32.6" cy="165.8" r="3.7"/><circle cx="822.1" cy="542.2" r="4.4"/><circle cx="741.2" cy="632.1" r="2.6"/><circle cx="803.8" cy="129.3" r="2.9"/><circle cx="36.6" cy="24.8" r="4.7"/><circle cx="371.1" cy="75.7" r="2.6"/><circle cx="824.4" cy="526.4" r="4.8"/><circle cx="36.4" cy="98.5" r="3.2"/><circle cx="186.0" cy="98.1" r="3.0"/><circle cx="623.7" cy="147.1" r="2.9"/><circle cx="521.6" cy="328.6" r="2.9"/><circle cx="553.4" cy="444.5" r="3.5"/><circle cx="462.0" cy="34.8" r="4.0"/><circle cx="188.3" cy="293.8" r="2.5"/><circle cx="864.6" cy="514.2" r="3.5"/><circle cx="527.8" cy="822.4" r="2.8"/><circle cx="373.5" cy="619.6" r="3.4"/><circle cx="688.4" cy="794.7" r="2.6"/><circle cx="277.1" cy="256.2" r="4.4"/><circle cx="763.9" cy="612.0" r="4.8"/><circle cx="180.9" cy="344.2" r="4.6"/><circle cx="745.6" cy="98.6" r="4.9"/><circle cx="721.2" cy="757.7" r="3.4"/><circle cx="589.7" cy="838.9" r="4.7"/><circle cx="562.1" cy="778.7" r="5.0"/><circle cx="817.4" cy="573.9" r="4.9"/><circle cx="140.0" cy="353.2" r="3.9"/><circle cx="128.2" cy="683.2" r="2.7"/><circle cx="612.4" cy="244.7" r="3.3"/><circle cx="591.1" cy="167.5" r="3.6"/><circle cx="834.9" cy="863.5" r="3.2"/><circle cx="356.1" cy="607.0" r="3.0"/><circle cx="827.0" cy="173.9" r="3.9"/><circle cx="330.6" cy="1.0" r="2.5"/><circle cx="1.9" cy="287.2" r="3.2"/><circle cx="965.6" cy="558.0" r="2.7"/><circle cx="697.4" cy="203.4" r="3.7"/><circle cx="703.8" cy="749.6" r="4.8"/><circle cx="410.0" cy="278.0" r="3.5"/><circle cx="304.6" cy="648.9" r="3.7"/><circle cx="667.7" cy="133.0" r="4.5"/><circle cx="941.6" cy="177.6" r="4.0"/><circle cx="157.9" cy="30.9" r="3.5"/><circle cx="178.5" cy="639.4" r="3.9"/><circle cx="657.0" cy="847.0" r="2.6"/><circle cx="95.8" cy="31.3" r="3.6"/><circle cx="803.0" cy="598.3" r="3.9"/><circle cx="833.9" cy="325.6" r="2.8"/><circle cx="624.9" cy="22.4" r="3.1"/><circle cx="29.0" cy="141.4" r="2.7"/><circle cx="517.7" cy="112.1" r="4.0"/><circle cx="802.8" cy="301.4" r="2.8"/><circle cx="653.8" cy="637.5" r="4.7"/><circle cx="539.7" cy="509.3" r="4.7"/><circle cx="659.6" cy="853.0" r="3.2"/><circle cx="754.2" cy="553.7" r="3.7"/><circle cx="10.5" cy="416.9" r="3.2"/><circle cx="585.9" cy="445.8" r="3.8"/><circle cx="57.2" cy="115.1" r="4.0"/><circle cx="664.3" cy="866.7" r="4.5"/><circle cx="282.5" cy="398.7" r="3.8"/><circle cx="783.1" cy="345.2" r="4.8"/><circle cx="471.4" cy="348.2" r="3.7"/><circle cx="348.1" cy="874.7" r="2.6"/><circle cx="389.2" cy="69.5" r="4.2"/><circle cx="146.7" cy="130.5" r="3.6"/><circle cx="586.4" cy="668.2" r="3.6"/><circle cx="287.4" cy="321.9" r="4.7"/><circle cx="207.7" cy="10.0" r="4.7"/><circle cx="470.4" cy="115.7" r="2.8"/><circle cx="867.3" cy="655.5" r="2.7"/><circle cx="657.6" cy="187.1" r="3.6"/><circle cx="589.3" cy="44.5" r="4.8"/><circle cx="326.5" cy="125.9" r="4.5"/><circle cx="106.3" cy="32.5" r="4.1"/><circle cx="457.9" cy="788.0" r="4.5"/><circle cx="201.1" cy="39.5" r="4.0"/><circle cx="458.2" cy="263.5" r="4.8"/><circle cx="203.0" cy="562.9" r="2.7"/><circle cx="899.6" cy="830.2" r="4.0"/><circle cx="312.0" cy="633.5" r="4.8"/><circle cx="774.2" cy="35.7" r="3.8"/><circle cx="136.3" cy="478.1" r="4.9"/><circle cx="842.4" cy="217.7" r="3.9"/><circle cx="309.2" cy="147.4" r="4.4"/><circle cx="739.6" cy="294.6" r="3.6"/><circle cx="678.4" cy="636.6" r="3.7"/><circle cx="115.2" cy="83.7" r="2.9"/><circle cx="804.9" cy="434.3" r="4.1"/><circle cx="355.1" cy="322.8" r="2.9"/><circle cx="949.3" cy="529.8" r="2.8"/><circle cx="684.4" cy="523.2" r="4.0"/><circle cx="749.9" cy="532.3" r="4.7"/><circle cx="944.5" cy="355.9" r="4.1"/><circle cx="364.6" cy="359.3" r="3.4"/><circle cx="630.4" cy="308.4" r="3.4"/><circle cx="824.8" cy="699.8" r="4.2"/><circle cx="821.7" cy="337.8" r="4.1"/><circle cx="244.7" cy="275.9" r="2.8"/><circle cx="777.7" cy="806.1" r="3.3"/><circle cx="368.5" cy="102.4" r="2.9"/><circle cx="621.6" cy="780.5" r="2.7"/><circle cx="248.0" cy="664.2" r="3.1"/><circle cx="854.9" cy="308.7" r="3.7"/><circle cx="196.4" cy="254.4" r="3.6"/><circle cx="271.0" cy="638.0" r="2.6"/><circle cx="622.2" cy="702.2" r="3.3"/><circle cx="186.5" cy="104.9" r="2.7"/><circle cx="771.6" cy="527.7" r="2.5"/><circle cx="441.5" cy="523.8" r="3.3"/><circle cx="33.9" cy="368.4" r="3.4"/><circle cx="947.0" cy="314.8" r="4.8"/><circle cx="845.5" cy="502.6" r="2.8"/><circle cx="786.8" cy="78.9" r="3.9"/><circle cx="94.7" cy="81.0" r="3.5"/><circle cx="152.2" cy="868.0" r="3.9"/><circle cx="873.8" cy="837.0" r="4.4"/><circle cx="629.0" cy="413.9" r="4.4"/><circle cx="652.0" cy="138.3" r="3.8"/><circle cx="402.8" cy="451.0" r="4.3"/><circle cx="671.1" cy="498.5" r="4.5"/><circle cx="803.8" cy="80.8" r="2.9"/><circle cx="45.9" cy="140.4" r="4.9"/><circle cx="301.5" cy="384.1" r="3.7"/><circle cx="549.7" cy="244.5" r="4.4"/><circle cx="323.0" cy="739.9" r="4.5"/><circle cx="1.1" cy="479.2" r="2.7"/><circle cx="861.0" cy="60.7" r="3.2"/><circle cx="748.8" cy="517.0" r="4.2"/><circle cx="402.3" cy="455.5" r="3.0"/><circle cx="450.4" cy="225.1" r="4.2"/><circle cx="104.0" cy="120.4" r="3.0"/><circle cx="519.0" cy="509.0" r="2.5"/><circle cx="961.5" cy="731.0" r="3.4"/><circle cx="154.7" cy="722.6" r="4.9"/><circle cx="173.5" cy="661.5" r="4.5"/><circle cx="912.8" cy="182.5" r="2.8"/><circle cx="160.2" cy="202.4" r="4.8"/><circle cx="886.3" cy="414.6" r="2.8"/><circle cx="343.4" cy="211.0" r="4.1"/><circle cx="701.3" cy="679.1" r="3.6"/><circle cx="445.0" cy="409.4" r="3.4"/><circle cx="443.3" cy="599.6" r="4.3"/><circle cx="317.9" cy="496.0" r="2.9"/><circle cx="44.0" cy="338.6" r="3.4"/><circle cx="31.7" cy="69.6" r="3.6"/><circle cx="917.8" cy="732.8" r="2.6"/><circle cx="308.5" cy="322.6" r="3.3"/><circle cx="133.5" cy="516.6" r="4.6"/><circle cx="371.8" cy="154.3" r="2.8"/><circle cx="14.8" cy="669.7" r="3.1"/><circle cx="705.2" cy="691.9" r="2.7"/><circle cx="184.0" cy="276.0" r="4.4"/><circle cx="717.7" cy="265.0" r="3.6"/><circle cx="345.9" cy="412.7" r="4.5"/><circle cx="254.9" cy="709.2" r="4.8"/><circle cx="585.4" cy="839.3" r="4.8"/><circle cx="166.7" cy="867.5" r="3.0"/><circle cx="783.7" cy="106.1" r="3.3"/><circle cx="430.6" cy="734.3" r="4.2"/><circle cx="198.5" cy="785.6" r="4.7"/><circle cx="496.6" cy="44.3" r="3.2"/><circle cx="284.8" cy="366.4" r="4.9"/><circle cx="579.6" cy="717.2" r="2.7"/><circle cx="239.1" cy="639.9" r="3.4"/><circle cx="221.5" cy="55.2" r="2.6"/><circle cx="401.6" cy="478.0" r="3.5"/><circle cx="550.3" cy="254.6" r="2.5"/><circle cx="656.8" cy="293.7" r="3.7"/><circle cx="367.9" cy="236.2" r="2.6"/><circle cx="288.9" cy="260.8" r="2.8"/><circle cx="28.8" cy="420.6" r="2.5"/><circle cx="856.1" cy="315.2" r="3.6"/><circle cx="512.0" cy="21.1" r="2.8"/><circle cx="764.9" cy="486.9" r="3.7"/><circle cx="334.8" cy="657.3" r="3.8"/><circle cx="771.7" cy="731.2" r="4.7"/><circle cx="707.0" cy="589.7" r="3.7"/><circle cx="519.5" cy="506.7" r="3.8"/><circle cx="797.8" cy="750.8" r="2.6"/><circle cx="732.5" cy="539.2" r="4.0"/><circle cx="884.6" cy="43.4" r="3.7"/><circle cx="365.6" cy="829.8" r="2.9"/><circle cx="548.4" cy="126.3" r="4.4"/><circle cx="476.4" cy="643.5" r="3.3"/><circle cx="860.4" cy="6.2" r="3.1"/><circle cx="714.3" cy="769.0" r="4.4"/><circle cx="268.0" cy="70.8" r="4.3"/><circle cx="712.4" cy="53.0" r="4.8"/><circle cx="514.1" cy="29.3" r="3.7"/><circle cx="329.4" cy="91.3" r="4.7"/><circle cx="910.3" cy="108.6" r="3.6"/><circle cx="266.3" cy="588.3" r="2.8"/><circle cx="324.8" cy="359.0" r="3.7"/><circle cx="423.9" cy="521.5" r="4.9"/><circle cx="907.3" cy="794.0" r="4.6"/><circle cx="222.4" cy="213.9" r="3.6"/><circle cx="626.6" cy="530.5" r="3.4"/><circle cx="966.0" cy="273.3" r="2.5"/><circle cx="88.4" cy="183.2" r="4.3"/><circle cx="818.9" cy="36.5" r="3.1"/><circle cx="236.1" cy="688.2" r="4.7"/><circle cx="256.5" cy="89.6" r="4.9"/><circle cx="946.2" cy="627.0" r="3.7"/><circle cx="727.4" cy="671.4" r="3.8"/><circle cx="264.2" cy="459.5" r="4.2"/><circle cx="315.9" cy="559.4" r="2.9"/><circle cx="945.6" cy="185.0" r="3.1"/><circle cx="935.3" cy="831.3" r="4.8"/><circle cx="819.3" cy="742.5" r="4.6"/><circle cx="551.9" cy="65.0" r="4.3"/><circle cx="814.0" cy="733.1" r="2.6"/><circle cx="59.7" cy="639.3" r="3.7"/><circle cx="870.4" cy="866.9" r="3.6"/><circle cx="657.9" cy="582.0" r="4.2"/><circle cx="358.0" cy="559.6" r="2.7"/><circle cx="876.7" cy="633.1" r="4.5"/><circle cx="450.2" cy="179.5" r="3.6"/><circle cx="662.9" cy="479.7" r="2.8"/><circle cx="3.6" cy="348.1" r="3.1"/><circle cx="220.9" cy="193.8" r="3.5"/><circle cx="677.1" cy="798.9" r="4.2"/><circle cx="20.2" cy="759.2" r="4.0"/><circle cx="712.7" cy="537.0" r="3.4"/><circle cx="330.4" cy="62.4" r="4.2"/><circle cx="52.6" cy="595.9" r="4.8"/><circle cx="650.5" cy="530.4" r="4.5"/><circle cx="934.7" cy="711.0" r="5.0"/><circle cx="447.7" cy="12.8" r="4.0"/><circle cx="621.9" cy="755.2" r="4.0"/><circle cx="353.9" cy="4.1" r="4.6"/><circle cx="608.5" cy="862.2" r="4.0"/><circle cx="830.5" cy="675.8" r="5.0"/><circle cx="450.3" cy="785.0" r="3.5"/><circle cx="10.9" cy="285.1" r="3.4"/><circle cx="966.5" cy="345.5" r="3.2"/><circle cx="672.8" cy="85.1" r="3.3"/><circle cx="384.7" cy="108.8" r="4.0"/><circle cx="412.0" cy="701.8" r="3.3"/><circle cx="951.9" cy="171.2" r="3.8"/><circle cx="220.4" cy="12.5" r="3.3"/><circle cx="872.2" cy="255.1" r="3.7"/></g></svg>
<div id="chat" class="abs">
<!-- bubble 1 -->
<div class="abs bub" style="left:225px;top:91px;width:715px;height:92px"></div>
<div class="ln" style="top:100px;letter-spacing:-0.06px">Selamat pagi bapak, ijin kembali meneruskan jalan berlubang ruas jalan magelang (dari</div>
<div class="ln" style="top:125px;letter-spacing:-0.05px">pom bensin krapyak sampai dengan bank bca sleman (putar balik)), laporan melalui</div>
<div class="ln" style="top:149.6px;letter-spacing:-0.12px">kanal aduan Elapor Pemda DIY, berikut kami kirimkan aduan tersebut</div>
<div class="tm" style="left:871px;top:161.7px;color:#5a7062">10.06</div>
<svg class="abs" style="left:912px;top:163px" width="22" height="14" viewBox="0 0 22 14"><path d="M1.1 7.9 L5.7 12.1 L15.2 1.1 M9.1 10.6 L10.6 12.1 L19.3 1.1" fill="none" stroke="#4f6a58" stroke-width="1.7" stroke-linecap="round" stroke-linejoin="round"/></svg>

<!-- bubble 2 -->
<div class="abs bub" style="left:521px;top:186px;width:420px;height:193px"></div>
<div class="abs" style="left:525px;top:191px;width:412px;height:184px;background:#fff;border-radius:6px;overflow:hidden">
  <div class="s" style="left:5px;top:10.5px;font-size:5px;color:#444">Judul aduan</div>
  <div class="s" style="left:5px;top:17.2px;font-size:6.4px;color:#111;-webkit-text-stroke:0.25px #111">Jalan berlubang</div>
  <div class="s" style="left:5px;top:34.5px;font-size:5px;color:#444">Deskripsi aduan</div>
  <div class="s" style="left:5px;top:41.3px;font-size:6.4px;line-height:7.55px;color:#1a1a1a">Jalan berlubang mulai dari pom bensin krapyak sampai dengan bank<br>bca sleman (putar balik). Sudah terlalu sering di tambal 1-2 hari<br>hujan deras berlubang lagi. Cukup berbahya bagi pengendara mobil<br>atau motor karena lubang cukup besar dan dalam. Mohon di bantu<br>untuk perbaikan menyeluruh</div>
  <div class="s" style="left:5px;top:90px;font-size:5px;color:#444">Lampiran</div>
  <div class="s" style="left:213px;top:9.5px;font-size:5.4px;color:#666"><b style="color:#444">Alamat:</b> Triharjo, 55514, Sleman, Sleman, Yogyakarta, Indonesia</div>
  <div class="s" style="left:213px;top:22px;font-size:4.2px;color:#999"><b style="color:#555">Lintang:</b> -7.697919</div>
  <div class="s" style="left:213px;top:30.3px;font-size:4.2px;color:#999"><b style="color:#555">Lintang:</b> 110.356956</div>
  <!-- map -->
  <svg class="abs" style="left:213px;top:36.7px" width="196" height="119" viewBox="0 0 196 119">
    <rect width="196" height="119" fill="#ebe5df"/>
    <g fill="none" stroke="#f5f2ee" stroke-width="1" opacity="0.8">
      <path d="M100 -2 L95 40 L88 80 L80 119"/>
      <path d="M140 -2 L138 50 L130 119"/>
      <path d="M0 90 L60 96 L130 100 L196 98"/>
      <path d="M110 60 L150 90 L170 119"/>
      <path d="M20 40 L18 119"/>
      <path d="M160 50 L165 119"/>
    </g>
    <path d="M59.6 -0.6 L39 17.8 L16.5 34.3 L0 58.9" fill="none" stroke="#a9a6a3" stroke-width="1"/>
    <path d="M190 -2 L196 60" fill="none" stroke="#a9a6a3" stroke-width="0.8"/>
    <g fill="none" stroke="#efd488" stroke-width="1.15" stroke-linejoin="round">
      <path d="M33 -2.7 L36 15.8 L42 34.3 L50.4 50.7 L59.6 69.2 L68.8 81.5 L76 93.8 L77 119"/>
      <path d="M37 17.8 L48.3 19.9 L67.8 27.1 L88.3 22 L106.8 23 L111 33.2 L125.3 37.3 L141.7 42.5 L145.8 28.1 L158.2 25 L172.5 30.2 L176.6 48.6 L178.7 65 L186.9 87.6 L189 119"/>
    </g>
    <circle cx="128" cy="55" r="2" fill="#e6d9b5"/>
    <circle cx="124" cy="75" r="2" fill="#a8d69a"/>
    <g font-family="Liberation Sans" font-size="5.4" fill="#555">
      <text x="0" y="30">wer</text><text x="31" y="30">Tempel</text><text x="86.5" y="30">Tu'i</text>
      <text x="125" y="44.5">Pakem</text><text x="154" y="36">Cangkringan</text>
      <text x="45.5" y="68.5">Sle</text><text x="145.5" y="77">Ngemplak</text>
      <text x="12.5" y="100">Sayegan</text><text x="38" y="112.5">Mlati</text><text x="190" y="72">M</text>
    </g>
    <rect x="48.3" y="50.3" width="8" height="5" fill="#fff" stroke="#888" stroke-width="0.5"/>
    <rect x="170.5" y="54.3" width="7" height="4.6" fill="#fff" stroke="#888" stroke-width="0.5"/>
    <path d="M61 58.4 a5.6 5.6 0 0 1 5.6 5.6 c0 3.5 -4 7 -5.6 10.3 c-1.6 -3.3 -5.6 -6.8 -5.6 -10.3 a5.6 5.6 0 0 1 5.6 -5.6z" fill="#3ba3b4"/>
    <circle cx="61" cy="63.6" r="2" fill="#fff"/>
    <rect x="180.8" y="4.5" width="11.2" height="33.9" rx="1" fill="#fff"/>
    <path d="M184 9.7 h5 M186.5 7.2 v5 M184.3 21 h4.4" stroke="#333" stroke-width="0.9"/>
    <path d="M186.5 28.8 l1.4 2.8 h-2.8z" fill="#333"/><path d="M186.5 31.6 l1.4 2.8 h-2.8z" fill="#bbb"/>
    <circle cx="186.6" cy="112.5" r="2.8" fill="#111"/><path d="M186.6 111.5 v2.5" stroke="#fff" stroke-width="0.8"/>
    <circle cx="6" cy="111.5" r="3.3" fill="none" stroke="#999" stroke-width="0.8"/>
    <text x="11" y="113.5" font-family="Liberation Sans" font-size="5" fill="#aaa">mapbox</text>
  </svg>
  <!-- thumbs -->
  <svg class="abs" style="left:4.2px;top:96px" width="40" height="54" viewBox="0 0 40 54">
    <defs><clipPath id="c1"><rect width="40" height="54" rx="2.5"/></clipPath><filter id="tb1"><feGaussianBlur stdDeviation="0.6"/></filter></defs>
    <g clip-path="url(#c1)" filter="url(#tb1)">
    <rect width="40" height="54" fill="#a2a2a1"/>
    <rect width="40" height="14" fill="#dde1e4"/>
    <path d="M0 0 L12 0 L13 6 L10 9 L14 11 L20 9 L26 11 L32 9 L40 8 L40 14 L0 15Z" fill="#55604d"/>
    <path d="M1 10.5 L13 10.5 L13 15.5 L1 15.5Z" fill="#c9cccd"/>
    <path d="M0 15 L40 13.5 L40 17 L0 19Z" fill="#8f918f"/>
    <path d="M0 19 L40 17 L40 54 L0 54Z" fill="#a4a4a3"/>
    <path d="M12 27 L18 22" stroke="#d8d8d6" stroke-width="1"/>
    <path d="M36.5 20 L39.5 19 L40 40 L36.8 38Z" fill="#3a3a3a"/>
    <ellipse cx="17.2" cy="36" rx="5.2" ry="3" fill="#1e2226"/>
    <path d="M21 37.5 L27 44" stroke="#333" stroke-width="1.2"/>
    <path d="M14.8 44 L26 41 L31 43 L18 48Z" fill="#c8323f"/>
    <path d="M19 45 L32 42 L40 44 L40 54 L22 54Z" fill="#1f2226"/>
    <path d="M16 47 L22 46 L22 54 L16 54Z" fill="#6f6f6f"/>
    <path d="M33 45 L37 47 L35 51Z" fill="#e8e8e8"/>
    </g>
  </svg>
  <svg class="abs" style="left:47.8px;top:96px" width="39.2" height="68" viewBox="0 0 39.2 68">
    <defs><clipPath id="c2"><rect width="39.2" height="68" rx="2.5"/></clipPath></defs>
    <g clip-path="url(#c2)" filter="url(#tb1)">
    <rect width="39.2" height="68" fill="#8e8e8d"/>
    <rect width="39.2" height="7" fill="#c8d5df"/>
    <path d="M0 4 L6 2 L14 5 L24 4 L30 6 L39.2 5 L39.2 12 L0 12Z" fill="#8b8a86"/>
    <path d="M0 11 L39.2 11 L39.2 23 L0 23Z" fill="#3b3a38"/>
    <path d="M0 14 L5 14 L5 22 L0 22Z" fill="#a99c66"/>
    <path d="M29 13 L39.2 12 L39.2 24 L29 24Z" fill="#b6aca3"/>
    <path d="M2 9 L20 9 L20 12 L2 12Z" fill="#c9c6b8"/>
    <path d="M0 23 L39.2 24 L39.2 29 L0 28Z" fill="#b4b4b2"/>
    <path d="M0 28 L39.2 29 L39.2 34 L0 33Z" fill="#d8d8d6"/>
    <path d="M0 29 L3 29 L3 32 L0 32Z M8 29 L12 29.3 L12 32.5 L8 32.2Z M17 29.5 L21 29.6 L21 33 L17 32.8Z M26 30 L30 30 L30 33.3 L26 33.2Z M35 30 L39.2 30.2 L39.2 33.5 L35 33.4Z" fill="#2e2e2e"/>
    <path d="M27 51.5 L39.2 54.5 L39.2 56 L27 53Z" fill="#f0f0f0"/>
    <ellipse cx="16" cy="43" rx="6" ry="1.5" fill="#7a7a79"/>
    </g>
  </svg>
  <svg class="abs" style="left:91px;top:96px" width="39" height="68.5" viewBox="0 0 39 68.5">
    <defs><clipPath id="c3"><rect width="39" height="68.5" rx="2.5"/></clipPath></defs>
    <g clip-path="url(#c3)" filter="url(#tb1)">
    <rect width="39" height="68.5" fill="#7a7a79"/>
    <path d="M0 0 L39 0 L39 9 L0 16.5Z" fill="#8a8781"/>
    <path d="M0 0 L39 0 L39 2 L0 5Z" fill="#5f5e5a"/>
    <path d="M17 1 L37 1 L37 6 L20 6Z" fill="#6c7060"/>
    <path d="M2 7 L18 5 L14 12 L2 14Z" fill="#a6a096"/>
    <path d="M0 15.8 L39 8.3 L39 9.6 L0 17.3Z" fill="#dcdcda"/>
    <path d="M0 40.5 L39 25.8 L39 28.6 L0 43.6Z" fill="#ececea"/>
    <path d="M0 44 L39 40 L39 68.5 L0 68.5Z" fill="#676767"/>
    <path d="M0 48 L11 45 L14.5 47 L12 54 L5 62 L0 64Z" fill="#3f3f3f"/>
    <path d="M0 50 L10 47 L12.5 48.5 L10 54 L4 60 L0 61Z" fill="#8a8782"/>
    <circle cx="30.3" cy="46" r="5.5" fill="#505050"/>
    <circle cx="30.3" cy="46" r="3.8" fill="#8a8782"/>
    </g>
  </svg>
  <div class="abs" style="left:0;top:150px;width:412px;height:34.5px;background:linear-gradient(to bottom,rgba(80,84,88,0) 0%,rgba(80,84,88,.35) 35%,rgba(70,74,78,.65) 100%)"></div>
  <div class="tm" style="left:345px;top:163.5px;color:#fff;font-size:15px">10.08</div>
  <svg class="abs" style="left:386px;top:164px" width="22" height="14" viewBox="0 0 22 14"><path d="M1.1 7.9 L5.7 12.1 L15.2 1.1 M9.1 10.6 L10.6 12.1 L19.3 1.1" fill="none" stroke="#fff" stroke-width="1.7" stroke-linecap="round" stroke-linejoin="round"/></svg>
</div>

<!-- bubble 3 -->
<div class="abs bub" style="left:631px;top:382px;width:310px;height:500px"></div>
<div class="abs" style="left:637px;top:386px;width:300px;height:480px;border-radius:6px;overflow:hidden">
  <svg width="300" height="480" viewBox="0 0 300 480">
    <defs>
      <linearGradient id="asph" x1="0" y1="0" x2="0.2" y2="1">
        <stop offset="0" stop-color="#838381"/>
        <stop offset="0.2" stop-color="#7c7c7b"/>
        <stop offset="0.45" stop-color="#6e6e6d"/>
        <stop offset="0.65" stop-color="#5e5e5e"/>
        <stop offset="0.85" stop-color="#525252"/>
        <stop offset="1" stop-color="#505050"/>
      </linearGradient>
      <filter id="bl1" x="-20%" y="-20%" width="140%" height="140%"><feGaussianBlur stdDeviation="1"/></filter>
      <filter id="bl2" x="-30%" y="-30%" width="160%" height="160%"><feGaussianBlur stdDeviation="2.5"/></filter>
      <filter id="bl3" x="-40%" y="-40%" width="180%" height="180%"><feGaussianBlur stdDeviation="6"/></filter>
      <filter id="noise" x="0" y="0" width="100%" height="100%">
        <feTurbulence type="fractalNoise" baseFrequency="0.9" numOctaves="1" seed="3" result="t"/>
        <feColorMatrix in="t" type="matrix" values="0 0 0 0 0.85  0 0 0 0 0.85  0 0 0 0 0.84  4 0 0 0 -2.3"/>
      </filter>
      <filter id="noise2" x="0" y="0" width="100%" height="100%">
        <feTurbulence type="fractalNoise" baseFrequency="0.6" numOctaves="2" seed="11" result="t"/>
        <feColorMatrix in="t" type="matrix" values="0 0 0 0 0.15  0 0 0 0 0.15  0 0 0 0 0.15  3 0 0 0 -1.5"/>
      </filter>
    </defs>
    <rect width="300" height="480" fill="url(#asph)"/>
    <!-- shoulder -->
    <path d="M0 0 L300 0 L300 14 L0 70 Z" fill="#787670"/>
    <g filter="url(#bl2)">
      <path d="M0 0 L120 0 L0 19 Z" fill="#8f8b84"/>
      <path d="M8 28 L60 22 L120 22 L95 34 L70 44 L55 58 L25 64 L10 64 Z" fill="#aca597"/>
      <path d="M20 30 L60 28 L80 34 L55 48 L40 58 L22 58Z" fill="#bdb6a8"/>
      <path d="M100 16 L150 12 L140 22 L100 28Z" fill="#9a958b"/>
      <path d="M170 0 L245 0 L235 8 L180 9Z" fill="#6c705e"/>
      <path d="M255 0 L300 0 L300 9 L262 10 Z" fill="#4a4a48"/>
      <path d="M150 38 L300 12 L300 20 L150 44Z" fill="#5d5c59"/>
    </g>
    <path d="M0 18 L117 1 L119 2.5 L0 20.5Z" fill="#55544f" filter="url(#bl1)"/>
    <path d="M0 22 L8 24 L12 62 L0 68Z" fill="#8d8a83" filter="url(#bl1)"/>
    <!-- dark halos -->
    <ellipse cx="90" cy="335" rx="60" ry="30" fill="#3e3e3e" filter="url(#bl3)" opacity="0.55"/>
    <ellipse cx="245" cy="320" rx="35" ry="40" fill="#454545" filter="url(#bl3)" opacity="0.5"/>
    <rect width="300" height="480" filter="url(#noise)" opacity="0.35"/>
    <rect width="300" height="480" filter="url(#noise2)" opacity="0.35"/>
    <!-- lines -->
    <path d="M0 69.6 L300 13.8 L300 18.3 L0 74.3 Z" fill="#e6e6e4" filter="url(#bl1)"/>
    <path d="M262 21 L300 30 L300 33 L262 23Z" fill="#4d4d4d" filter="url(#bl1)"/>
    <path d="M0 266 L300 145 L300 162 L0 286 Z" fill="#eeeeec"/>
    <!-- pothole 2 -->
    <path d="M197 276 Q202 262 218 259 L243 258 Q259 261 266 270 Q275 281 276 292 L274 320 Q270 332 262 338 L257 326 L259 300 Q250 274 226 269 Q206 270 201 286Z" fill="#3d3d3d" filter="url(#bl2)" opacity="0.7"/>
    <path d="M201 290 Q203 272 225 270.5 Q252 271 262 292 Q267 312 260 324 Q242 322 230 315 Q210 310 203 300Z" fill="#8c887f" filter="url(#bl1)"/>
    <ellipse cx="230" cy="304" rx="10" ry="7" fill="#6a6761" filter="url(#bl2)"/>
    <!-- pothole 1 -->
    <path d="M0 320 L32.7 305 L75 290 L100 289 L113.7 301 L117 330 L108.7 346.8 L83.4 380.5 L63 409 L0 409 Z" fill="#363636" filter="url(#bl2)" opacity="0.75"/>
    <path d="M0 333.3 L32.7 321.5 L80 299.6 L100 301.2 L108.7 311.4 L108.7 326.5 L93.5 353.5 L66.5 375.5 L46.2 399 L37.8 409 L0 409 Z" fill="#8d8a83" filter="url(#bl1)"/>
    <clipPath id="pc1"><path d="M0 333.3 L32.7 321.5 L80 299.6 L100 301.2 L108.7 311.4 L108.7 326.5 L93.5 353.5 L66.5 375.5 L46.2 399 L37.8 409 L0 409 Z"/></clipPath><clipPath id="pc2"><path d="M201 290 Q203 272 225 270.5 Q252 271 262 292 Q267 312 260 324 Q242 322 230 315 Q210 310 203 300Z"/></clipPath>
    <g clip-path="url(#pc1)" filter="url(#bl1)" opacity="0.55"><circle cx="68.5" cy="380.3" r="3.9" fill="#77746e"/><circle cx="3.2" cy="349.7" r="4.3" fill="#5f5c57"/><circle cx="99.1" cy="310.6" r="2.9" fill="#6b6863"/><circle cx="41.9" cy="309.3" r="2.2" fill="#6b6863"/><circle cx="44.9" cy="318.2" r="4.1" fill="#b0aca2"/><circle cx="17.6" cy="386.5" r="1.9" fill="#77746e"/><circle cx="48.9" cy="312.7" r="4.4" fill="#5f5c57"/><circle cx="23.0" cy="321.9" r="4.4" fill="#6b6863"/><circle cx="31.8" cy="404.7" r="3.1" fill="#6b6863"/><circle cx="20.0" cy="405.5" r="2.1" fill="#b0aca2"/><circle cx="32.9" cy="338.1" r="2.0" fill="#6b6863"/><circle cx="29.0" cy="334.8" r="4.0" fill="#77746e"/><circle cx="0.4" cy="373.3" r="2.5" fill="#a7a39a"/><circle cx="39.1" cy="332.0" r="3.6" fill="#6b6863"/><circle cx="52.9" cy="376.2" r="1.7" fill="#5f5c57"/><circle cx="104.4" cy="337.7" r="2.7" fill="#77746e"/><circle cx="86.7" cy="338.6" r="3.2" fill="#5f5c57"/><circle cx="49.8" cy="376.6" r="3.4" fill="#6b6863"/><circle cx="13.1" cy="325.3" r="4.0" fill="#b0aca2"/><circle cx="37.9" cy="337.4" r="3.1" fill="#b0aca2"/><circle cx="11.9" cy="381.1" r="3.9" fill="#a7a39a"/><circle cx="4.0" cy="403.0" r="1.8" fill="#a7a39a"/><circle cx="56.4" cy="338.3" r="1.9" fill="#a7a39a"/><circle cx="101.7" cy="358.5" r="2.4" fill="#a7a39a"/><circle cx="33.7" cy="386.7" r="3.4" fill="#a7a39a"/><circle cx="109.6" cy="315.9" r="1.6" fill="#77746e"/><circle cx="58.7" cy="343.1" r="2.2" fill="#77746e"/><circle cx="37.8" cy="325.8" r="3.5" fill="#6b6863"/><circle cx="6.1" cy="399.7" r="1.6" fill="#b0aca2"/><circle cx="36.8" cy="321.0" r="4.4" fill="#77746e"/><circle cx="104.5" cy="368.0" r="3.9" fill="#5f5c57"/><circle cx="18.6" cy="339.4" r="1.7" fill="#b0aca2"/><circle cx="32.4" cy="348.3" r="4.5" fill="#6b6863"/><circle cx="107.4" cy="348.3" r="3.0" fill="#a7a39a"/><circle cx="52.7" cy="330.3" r="2.7" fill="#6b6863"/><circle cx="12.4" cy="389.2" r="3.1" fill="#6b6863"/><circle cx="69.0" cy="353.4" r="2.5" fill="#5f5c57"/><circle cx="54.1" cy="355.2" r="3.1" fill="#77746e"/><circle cx="39.7" cy="385.2" r="3.8" fill="#77746e"/><circle cx="73.0" cy="382.3" r="2.6" fill="#a7a39a"/></g>
    <g clip-path="url(#pc2)" filter="url(#bl1)" opacity="0.55"><circle cx="254.3" cy="284.6" r="4.0" fill="#a7a39a"/><circle cx="262.2" cy="288.7" r="1.9" fill="#5f5c57"/><circle cx="230.8" cy="312.6" r="2.3" fill="#a7a39a"/><circle cx="230.1" cy="314.9" r="3.1" fill="#a7a39a"/><circle cx="222.6" cy="305.4" r="3.3" fill="#b0aca2"/><circle cx="222.8" cy="316.4" r="3.7" fill="#b0aca2"/><circle cx="263.4" cy="322.6" r="2.8" fill="#77746e"/><circle cx="263.7" cy="280.9" r="2.4" fill="#b0aca2"/><circle cx="218.4" cy="274.3" r="3.2" fill="#b0aca2"/><circle cx="211.2" cy="312.9" r="3.0" fill="#b0aca2"/><circle cx="219.7" cy="300.4" r="3.7" fill="#a7a39a"/><circle cx="246.8" cy="271.5" r="1.9" fill="#b0aca2"/><circle cx="240.6" cy="279.9" r="3.4" fill="#6b6863"/><circle cx="241.0" cy="272.3" r="2.7" fill="#6b6863"/><circle cx="210.8" cy="319.0" r="1.8" fill="#6b6863"/><circle cx="231.4" cy="300.2" r="2.5" fill="#a7a39a"/><circle cx="224.7" cy="303.6" r="3.0" fill="#6b6863"/><circle cx="246.7" cy="290.6" r="2.4" fill="#a7a39a"/><circle cx="255.6" cy="317.7" r="3.2" fill="#77746e"/><circle cx="224.3" cy="272.0" r="3.0" fill="#5f5c57"/><circle cx="219.2" cy="298.2" r="3.9" fill="#a7a39a"/><circle cx="262.3" cy="315.0" r="2.5" fill="#77746e"/></g>
    <path d="M15 372 Q35 352 60 348 Q70 356 55 368 Q35 385 12 395Z" fill="#6a6762" opacity="0.7" filter="url(#bl2)"/>
    <path d="M40 340 Q60 330 75 335 Q65 345 45 350Z" fill="#74716b" opacity="0.6" filter="url(#bl2)"/>
  </svg>
  <div class="tm" style="left:232px;top:400px;color:#fff;font-size:15px">10.08</div>
  <svg class="abs" style="left:275.5px;top:401px" width="22" height="14" viewBox="0 0 22 14"><path d="M1.1 7.9 L5.7 12.1 L15.2 1.1 M9.1 10.6 L10.6 12.1 L19.3 1.1" fill="none" stroke="#fff" stroke-width="1.7" stroke-linecap="round" stroke-linejoin="round"/></svg>
</div>
</div>

<div class="abs fwd" style="left:480.8px;top:266.3px"><svg width="32" height="32" viewBox="-16 -16 32 32"><path d="M-8.9 6.2 C-9.2 1.6 -7.2 -1 -2.5 -1 L4 -1 M-0.6 -6 L4.3 -1 L-0.6 4 M4.7 -6 L9.7 -1 L4.7 4" fill="none" stroke="#474a4c" stroke-width="1.9" stroke-linecap="round" stroke-linejoin="round"/></svg></div>

<div class="abs" style="left:955.5px;top:720.5px;width:51px;height:51px;border-radius:50%;background:#fff;box-shadow:0 1px 3px rgba(11,20,26,.2)"></div>
<div class="abs fwd" style="left:593.4px;top:580.8px"><svg width="32" height="32" viewBox="-16 -16 32 32"><path d="M-8.9 6.2 C-9.2 1.6 -7.2 -1 -2.5 -1 L4 -1 M-0.6 -6 L4.3 -1 L-0.6 4 M4.7 -6 L9.7 -1 L4.7 4" fill="none" stroke="#474a4c" stroke-width="1.9" stroke-linecap="round" stroke-linejoin="round"/></svg></div>
</div>

<div id="hdr" class="abs">
  <div id="title" class="abs">PJN DIY PU</div>
  <svg class="abs" style="left:905px;top:22px" width="30" height="30" viewBox="0 0 30 30">
    <circle cx="12" cy="10.7" r="7.1" fill="none" stroke="#000" stroke-width="2.2"/>
    <line x1="17.3" y1="16" x2="25.2" y2="24.2" stroke="#000" stroke-width="2.3"/>
  </svg>
</div>
<div id="input" class="abs"><svg class="abs" style="left:960px;top:20px" width="14" height="20" viewBox="960 815 14 20"><path d="M970.2 827.2 Q971.5 832.3 975 834" fill="none" stroke="#000" stroke-width="2.2" stroke-linecap="round"/></svg></div>
<div id="tb" class="abs">
  <svg class="abs" style="left:0;top:0" width="974" height="50" viewBox="0 0 974 50">
    <g fill="none" stroke="#fff" stroke-width="1.3" stroke-linecap="round" stroke-linejoin="round">
      <path d="M710 28.5 L718 20.5 L726 28.5"/>
      <rect x="742.5" y="20.8" width="8.5" height="8.7" rx="1.2"/>
      <path d="M751 23.5 L755.5 21 L755.5 29 L751 26.6"/>
      <path d="M743 17 Q749 14 755 17 M743 33 Q749 36 755 33"/>
      <path d="M771 31.5 A14 14 0 0 1 785.5 17.5 M774.5 31.5 A10.5 10.5 0 0 1 785.5 21 M778 31.5 A7 7 0 0 1 785 24.5"/>
      <path d="M798.5 22 L802 22 L806.5 18 L806.5 32 L802 28 L798.5 28 Z"/>
      <path d="M809.8 21.8 Q812.6 25 809.8 28.2"/>
      <path d="M812.8 16.5 Q820 25 812.8 33.5" stroke="#7d889b"/>
    </g>
    <circle cx="785" cy="31" r="1.4" fill="#fff"/>
  </svg>
  <div class="tbt" style="left:831px;top:18.2px;font-size:15.6px;line-height:17px;transform:scaleX(0.9);transform-origin:0 0">ENG</div>
  <div class="tbt" style="left:896px;top:5.6px;font-size:14.6px;line-height:17px">10:08</div>
  <div class="tbt" style="left:876px;top:28.3px;font-size:14.8px;line-height:17px;letter-spacing:0.42px">13/01/2026</div>
</div>
</body></html>
